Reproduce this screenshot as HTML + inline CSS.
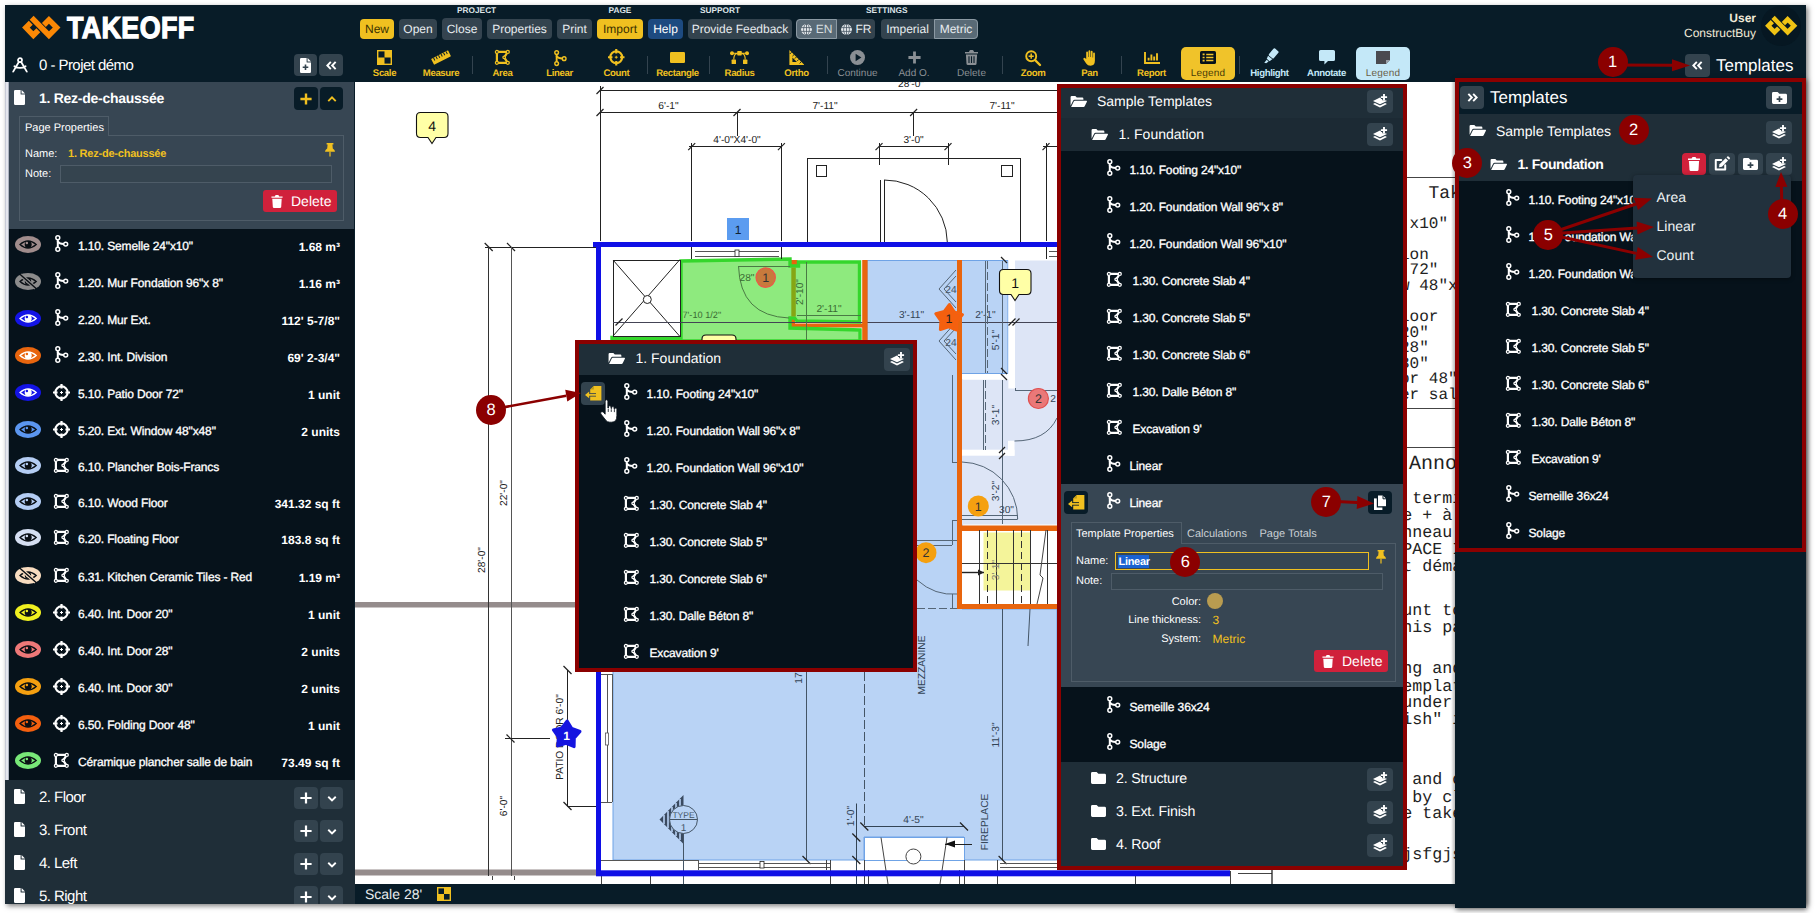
<!DOCTYPE html><html><head><meta charset="utf-8"><title>Takeoff</title><style>
html,body{margin:0;padding:0;background:#fff}
body{text-rendering:geometricPrecision;width:1815px;height:913px;overflow:hidden;position:relative;font-family:"Liberation Sans",sans-serif;color:#fff}
div{position:absolute;box-sizing:border-box}
svg{display:block}
.t{position:absolute;white-space:nowrap;line-height:1;}
.b12{font-size:12px;-webkit-text-stroke:.33px currentColor;letter-spacing:-.14px}
.v12{font-size:12px;font-weight:bold}
.p15{font-size:15px;letter-spacing:-.55px}
.f14{font-size:14px}
.s11{font-size:11px;margin-top:.8px}
.mb{font-size:12px;line-height:20px;text-align:center;border-radius:4px;background:#33434e;color:#e8ecef}
.lab{font-size:8.3px;font-weight:bold;letter-spacing:0;color:#dfe6ea}
.tl{font-size:9.6px;font-weight:bold;text-align:center;transform:translateX(-50%);letter-spacing:-.35px}
.btn{border-radius:4px;background:#33434e}
.mono{font-family:"Liberation Mono",monospace;color:#222;font-size:15px}
.circ{border-radius:50%;background:#8b0000;color:#fff;font-size:16.5px;text-align:center}
.cv{font-size:9px;fill:#222;font-family:"Liberation Sans",sans-serif}
</style></head><body>
<div style="left:5px;top:5px;width:1801px;height:899px;background:#081c28;box-shadow:2px 2px 5px rgba(0,0,0,.5)"></div>
<div style="left:1455px;top:78px;width:351px;height:829.5px;background:#081c28;box-shadow:1px 2px 5px rgba(0,0,0,.5)"></div>
<div style="left:0;top:0;width:1806px;height:904px;overflow:hidden">
<svg style="position:absolute;left:21.8px;top:15.9px;overflow:visible" width="38.5" height="23.2" viewBox="0 0 38.5 23.2" ><g fill="none" stroke="#fb8805" stroke-width="5.50" stroke-linejoin="miter"><path d="M8.75 6.77 L3.93 11.59 L11.38 19.26 L16.33 14.31"/><path d="M9.63 1.74 L26.93 19.26 L34.59 11.59 L26.93 3.93 L21.89 8.96"/></g></svg>
<span class="t" style="left:66.6px;top:12.5px;font-size:30.5px;font-weight:bold;transform-origin:0 50%;transform:scaleX(.882);-webkit-text-stroke:1.25px #fff;letter-spacing:.4px">TAKEOFF</span>
<span class="t lab" style="left:457px;top:6px;">PROJECT</span>
<span class="t lab" style="left:608.5px;top:6px;">PAGE</span>
<span class="t lab" style="left:700px;top:6px;">SUPPORT</span>
<span class="t lab" style="left:866px;top:6px;">SETTINGS</span>
<div class="mb" style="left:360px;top:19px;width:34px;height:20px;line-height:20px;background:#f0c020;color:#3a3000">New</div>
<div class="mb" style="left:399px;top:19px;width:38px;height:20px;line-height:20px;">Open</div>
<div class="mb" style="left:442px;top:18px;width:40px;height:22px;line-height:22px;background:#34434f">Close</div>
<div class="mb" style="left:487px;top:19px;width:65px;height:20px;line-height:20px;">Properties</div>
<div class="mb" style="left:557px;top:19px;width:35px;height:20px;line-height:20px;">Print</div>
<div class="mb" style="left:597px;top:19px;width:46px;height:20px;line-height:20px;background:#f0c020;color:#3a3000">Import</div>
<div class="mb" style="left:648px;top:19px;width:35px;height:20px;line-height:20px;background:#1d4a80;color:#fff">Help</div>
<div class="mb" style="left:688px;top:19px;width:104px;height:20px;line-height:20px;">Provide Feedback</div>
<div class="mb" style="left:796px;top:19px;width:79px;height:20px;line-height:20px;"></div>
<div class="mb" style="left:796px;top:19px;width:41px;height:20px;line-height:20px;background:#596a76;border:1px solid #8b99a3;line-height:18px;border-radius:4px 0 0 4px;color:#d6dcdf"><svg style="display:inline-block;vertical-align:-2px;margin-right:4px" width="11" height="11" viewBox="0 0 11 11"><circle cx="5.5" cy="5.5" r="5.4" fill="#e4e8eb"/><path d="M5.5 0V11M0 3.6H11M0 7.4H11" stroke="#4a5966" stroke-width=".8" fill="none"/><ellipse cx="5.5" cy="5.5" rx="2.9" ry="5.4" fill="none" stroke="#4a5966" stroke-width=".8"/></svg>EN</div>
<div class="mb" style="left:837px;top:19px;width:38px;height:20px;background:none"><svg style="display:inline-block;vertical-align:-2px;margin-right:4px" width="11" height="11" viewBox="0 0 11 11"><circle cx="5.5" cy="5.5" r="5.4" fill="#e4e8eb"/><path d="M5.5 0V11M0 3.6H11M0 7.4H11" stroke="#4a5966" stroke-width=".8" fill="none"/><ellipse cx="5.5" cy="5.5" rx="2.9" ry="5.4" fill="none" stroke="#4a5966" stroke-width=".8"/></svg>FR</div>
<div class="mb" style="left:881px;top:19px;width:97px;height:20px;line-height:20px;"></div>
<div class="mb" style="left:881px;top:19px;width:53px;height:20px;background:none">Imperial</div>
<div class="mb" style="left:934px;top:19px;width:44px;height:20px;line-height:20px;background:#596a76;border:1px solid #8b99a3;line-height:18px;border-radius:0 4px 4px 0">Metric</div>
<span class="t" style="right:50px;top:12px;font-size:12px;font-weight:bold;color:#f1ead8">User</span>
<span class="t" style="right:50px;top:27px;font-size:12px;color:#f1ead8">ConstructBuy</span>
<div style="left:1761px;top:6px;width:40px;height:40px;border-radius:50%;background:#061722"></div>
<svg style="position:absolute;left:1764.7px;top:16px;overflow:visible" width="32.3" height="19.5" viewBox="0 0 32.3 19.5" ><g fill="none" stroke="#f0c314" stroke-width="4.62" stroke-linejoin="miter"><path d="M7.35 5.69 L3.30 9.74 L9.56 16.18 L13.72 12.02"/><path d="M8.09 1.46 L22.62 16.18 L29.06 9.74 L22.62 3.30 L18.39 7.53"/></g></svg>
<svg style="position:absolute;left:377px;top:50px;overflow:visible" width="15" height="15" viewBox="0 0 15 15" ><rect x=".7" y=".7" width="13.6" height="13.6" fill="none" stroke="#f0c020" stroke-width="1.4"/><rect x="7.5" y="0" width="7.5" height="7.5" fill="#f0c020"/><rect x="0" y="7.5" width="7.5" height="7.5" fill="#f0c020"/></svg>
<span class="t tl" style="left:384.5px;top:68.6px;color:#f0c020">Scale</span>
<svg style="position:absolute;left:431px;top:49px;overflow:visible" width="20" height="17" viewBox="0 0 20 17" ><g transform="rotate(-27 10 8.5)"><rect x="0.5" y="5.3" width="19" height="6.6" rx=".6" fill="#f0c020"/><path d="M3.2 5.3V8.3M6 5.3V8.3M8.8 5.3V8.3M11.6 5.3V8.3M14.4 5.3V8.3M17.2 5.3V8.3" stroke="#081c28" stroke-width="1"/></g></svg>
<span class="t tl" style="left:441px;top:68.6px;color:#f0c020">Measure</span>
<div style="left:472px;top:56px;width:1px;height:18px;background:#33434f"></div>
<svg style="position:absolute;left:495.2px;top:50.2px;overflow:visible" width="14.7" height="14.7" viewBox="0 0 14.7 14.7" ><g fill="none" stroke="#f0c020" stroke-width="2.2" stroke-linejoin="round"><path d="M1.9 1.9 L12.8 1.9 L9.2 7.35 L12.8 12.8 L1.9 12.8 Z"/><g fill="#081c28" stroke-width="1.3"><circle cx="1.9" cy="1.9" r="1.5"/><circle cx="12.8" cy="1.9" r="1.5"/><circle cx="12.8" cy="12.8" r="1.5"/><circle cx="1.9" cy="12.8" r="1.5"/><circle cx="9.2" cy="7.35" r="1.3"/></g></g></svg>
<span class="t tl" style="left:502.5px;top:68.6px;color:#f0c020">Area</span>
<svg style="position:absolute;left:553.8px;top:49.5px;overflow:visible" width="12.73" height="16.15" viewBox="0 0 13.4 17" ><g fill="none" stroke="#f0c020" stroke-width="2" stroke-linecap="round"><path d="M2.8 3 V14"/><path d="M2.8 6.6 Q4.4 8.8 8.6 9.0"/><g fill="#081c28" stroke-width="1.5"><circle cx="2.8" cy="2.7" r="1.95"/><circle cx="2.8" cy="14.3" r="1.95"/><circle cx="10.7" cy="9.1" r="1.95"/></g></g></svg>
<span class="t tl" style="left:559.5px;top:68.6px;color:#f0c020">Linear</span>
<svg style="position:absolute;left:608.2px;top:49.2px;overflow:visible" width="16.49" height="16.49" viewBox="0 0 17 17" ><g fill="none" stroke="#f0c020" stroke-width="2.2" stroke-linecap="butt"><circle cx="8.5" cy="8.5" r="6.1"/><path d="M8.5 0V4.6 M8.5 12.4V17 M0 8.5H4.6 M12.4 8.5H17"/></g><path d="M8.5 7V10M7 8.5H10" stroke="#f0c020" stroke-width="1"/></svg>
<span class="t tl" style="left:616.5px;top:68.6px;color:#f0c020">Count</span>
<div style="left:647px;top:56px;width:1px;height:18px;background:#33434f"></div>
<svg style="position:absolute;left:670px;top:52px;overflow:visible" width="15" height="11" viewBox="0 0 15 11" ><rect width="15" height="11" rx="1.2" fill="#f0c020"/></svg>
<span class="t tl" style="left:677.5px;top:68.6px;color:#f0c020">Rectangle</span>
<div style="left:709px;top:56px;width:1px;height:18px;background:#33434f"></div>
<svg style="position:absolute;left:730px;top:51px;overflow:visible" width="19" height="13" viewBox="0 0 19 13" ><g fill="#f0c020"><rect x="7.2" y="0" width="4.6" height="4.6" rx=".8"/><rect x="1.6" y="8.6" width="4.4" height="4.4" rx=".6"/><rect x="13" y="8.6" width="4.4" height="4.4" rx=".6"/><circle cx="2" cy="2.3" r="2"/><circle cx="17" cy="2.3" r="2"/></g><path d="M2 2.3H17 M3.8 8.6 Q3.8 2.8 7.2 2.4 M15.2 8.6 Q15.2 2.8 11.8 2.4" stroke="#f0c020" stroke-width="1.1" fill="none"/></svg>
<span class="t tl" style="left:739.5px;top:68.6px;color:#f0c020">Radius</span>
<svg style="position:absolute;left:789px;top:50px;overflow:visible" width="15" height="15" viewBox="0 0 15 15" ><path d="M0.4 0 L15 14.6 V15 H0.4 Z M3.4 7.6 L8 12 H3.4 Z" fill="#f0c020" fill-rule="evenodd"/><path d="M2.6 2.2 L0.8 4 M5 4.6 L3.4 6.2 M7.4 7 L5.8 8.6 M9.8 9.4 L8.2 11 M12.2 11.8 L10.6 13.4" stroke="#081c28" stroke-width=".9"/></svg>
<span class="t tl" style="left:796.5px;top:68.6px;color:#f0c020">Ortho</span>
<div style="left:827px;top:56px;width:1px;height:18px;background:#33434f"></div>
<svg style="position:absolute;left:850px;top:50px;overflow:visible" width="15" height="15" viewBox="0 0 15 15" ><circle cx="7.5" cy="7.5" r="7.5" fill="#8a8f94"/><path d="M5.6 3.8 L11.4 7.5 L5.6 11.2 Z" fill="#081c28"/></svg>
<span class="t tl" style="left:857.5px;top:68.6px;color:#8a8f94;font-weight:normal;font-size:10px;letter-spacing:0">Continue</span>
<svg style="position:absolute;left:907.5px;top:51px;overflow:visible" width="13" height="13" viewBox="0 0 12 12" ><path d="M6 0.4 V11.6 M0.4 6 H11.6" fill="none" stroke="#8a8f94" stroke-width="2.6"/></svg>
<span class="t tl" style="left:914px;top:68.6px;color:#8a8f94;font-weight:normal;font-size:10px;letter-spacing:0">Add O.</span>
<svg style="position:absolute;left:965px;top:50px;overflow:visible" width="13" height="15" viewBox="0 0 14 16" ><path d="M0 2 H4.2 L5 0.4 Q5.2 0 5.7 0 H8.3 Q8.8 0 9 0.4 L9.8 2 H14 V3.7 H0 Z" fill="#8a8f94"/><path d="M1 4.8 H13 L12.4 14.6 Q12.3 16 10.9 16 H3.1 Q1.7 16 1.6 14.6 Z" fill="#8a8f94"/><path d="M4.3 6.6 V13.8 M7 6.6 V13.8 M9.7 6.6 V13.8" stroke="#081c28" stroke-width="1.2"/></svg>
<span class="t tl" style="left:971.5px;top:68.6px;color:#8a8f94;font-weight:normal;font-size:10px;letter-spacing:0">Delete</span>
<div style="left:1002px;top:56px;width:1px;height:18px;background:#33434f"></div>
<svg style="position:absolute;left:1025px;top:50px;overflow:visible" width="16" height="16" viewBox="0 0 16 16" ><circle cx="6.2" cy="6.2" r="5" fill="none" stroke="#f0c020" stroke-width="1.9"/><path d="M10 10 L15 15" stroke="#f0c020" stroke-width="2.4" stroke-linecap="round"/><path d="M6.2 3.6V8.8M3.6 6.2H8.8" stroke="#f0c020" stroke-width="1.5"/></svg>
<span class="t tl" style="left:1033px;top:68.6px;color:#f0c020">Zoom</span>
<svg style="position:absolute;left:1083px;top:49.5px;overflow:visible" width="14" height="16" viewBox="0 0 14 16" ><path d="M3.2 9 V2.6 Q3.2 1.6 4.1 1.6 Q5 1.6 5 2.6 V7 H5.5 V1.2 Q5.5 .2 6.4 .2 Q7.3 .2 7.3 1.2 V7 H7.8 V1.8 Q7.8 .8 8.7 .8 Q9.6 .8 9.6 1.8 V7.4 H10.1 V3.6 Q10.1 2.6 11 2.6 Q11.9 2.6 11.9 3.6 V10.6 Q11.9 15.8 7.6 15.8 Q4.6 15.8 3.2 13.4 L.5 9.4 Q.0 8.4 .8 7.9 Q1.6 7.5 2.3 8.3 Z" fill="#f0c020"/></svg>
<span class="t tl" style="left:1089.5px;top:68.6px;color:#f0c020">Pan</span>
<div style="left:1121px;top:56px;width:1px;height:18px;background:#33434f"></div>
<svg style="position:absolute;left:1143.5px;top:52px;overflow:visible" width="16" height="12" viewBox="0 0 16 12" ><path d="M1 0V11H16" stroke="#f0c020" stroke-width="1.9" fill="none"/><path d="M4.6 8.6V5.8M7.4 8.6V2.4M10.2 8.6V4.4M13 8.6V1.2" stroke="#f0c020" stroke-width="1.9"/></svg>
<span class="t tl" style="left:1151.5px;top:68.6px;color:#f0c020">Report</span>
<div style="left:1181px;top:47px;width:54px;height:33px;background:#f0c32a;border-radius:5px"></div>
<svg style="position:absolute;left:1200px;top:51px;overflow:visible" width="16" height="13" viewBox="0 0 16 13" ><rect width="16" height="13" rx="1.6" fill="#06121b"/><path d="M2.6 3.4H4.6M2.6 6.5H4.6M2.6 9.6H4.6" stroke="#f0c32a" stroke-width="1.7"/><path d="M6.2 3.4H13.4M6.2 6.5H13.4M6.2 9.6H13.4" stroke="#f0c32a" stroke-width="1.5"/></svg>
<span class="t tl" style="font-weight:normal;font-size:10px;letter-spacing:.2px;left:1208px;top:68.6px;color:#4a3c08">Legend</span>
<div style="left:1239px;top:56px;width:1px;height:18px;background:#33434f"></div>
<svg style="position:absolute;left:1262px;top:50px;overflow:visible" width="16" height="15" viewBox="0 0 16 15" ><g transform="rotate(40 8 7.5)" fill="#c4e8f8"><rect x="5" y="-2.6" width="6.4" height="9.2" rx="1.2"/><path d="M5.4 7.4 H11 L10 10.6 H6.4 Z"/><path d="M7 11.4 H9.4 L8.8 14.4 L7 15.2 Z"/></g></svg>
<span class="t tl" style="left:1269.5px;top:68.6px;color:#c4e8f8">Highlight</span>
<svg style="position:absolute;left:1319px;top:50px;overflow:visible" width="16" height="15" viewBox="0 0 16 15" ><path d="M1.6 0 H14.4 Q16 0 16 1.6 V9.4 Q16 11 14.4 11 H9 L5.4 14.6 V11 H1.6 Q0 11 0 9.4 V1.6 Q0 0 1.6 0Z" fill="#c4e8f8"/></svg>
<span class="t tl" style="left:1326.5px;top:68.6px;color:#c4e8f8">Annotate</span>
<div style="left:1356px;top:47px;width:54px;height:33px;background:#c4e8f8;border-radius:5px"></div>
<svg style="position:absolute;left:1376px;top:51px;overflow:visible" width="14" height="13" viewBox="0 0 14 13" ><path d="M0 0H14V9L10 13H0Z" fill="#4a4a50"/><path d="M10 13V9H14Z" fill="#9aa0a8"/></svg>
<span class="t tl" style="font-weight:normal;font-size:10px;letter-spacing:.2px;left:1383px;top:68.6px;color:#6a6048">Legend</span>
<svg style="position:absolute;left:12px;top:57px;overflow:visible" width="16" height="16" viewBox="0 0 16 16" ><g fill="none" stroke="#fff" stroke-width="1.8" stroke-linecap="round"><circle cx="8" cy="3.2" r="2"/><path d="M6.8 5 L1.2 14.6 M9.2 5 L14.8 14.6 M2.4 9.2 Q8 12.6 13.6 9.2"/></g></svg>
<span class="t p15" style="left:39px;top:57.5px;letter-spacing:-.55px">0 - Projet démo</span>
<div class="btn" style="left:294px;top:54px;width:23px;height:22px;"><svg style="position:absolute;left:6px;top:3.5px;overflow:visible" width="11" height="15" viewBox="0 0 11 15" ><path d="M0 1.2 Q0 0 1.2 0 H6.6 V4 Q6.6 4.6 7.2 4.6 H11 V13.8 Q11 15 9.8 15 H1.2 Q0 15 0 13.8 Z M7.6 0 L11 3.6 H7.6 Z" fill="#fff"/><path d="M5.5 6.4 V12 M2.7 9.2 H8.3" stroke="#33434e" stroke-width="1.6"/></svg></div>
<div class="btn" style="left:319px;top:54px;width:24px;height:22px;"><svg style="position:absolute;left:6.5px;top:6.5px;overflow:visible" width="11" height="9" viewBox="0 0 11.4 9" ><path d="M5 0.8 L1.4 4.5 L5 8.2 M10 0.8 L6.4 4.5 L10 8.2" fill="none" stroke="#fff" stroke-width="2" /></svg></div>
<div style="left:5px;top:82px;width:349.3px;height:698px;background:linear-gradient(90deg,#b9bdcc 0,#e4e6ee 1.5px,#e4e6ee 2.6px,#8f97a8 4px)"></div>
<div style="left:9px;top:82px;width:345.3px;height:147px;background:#374653"></div>
<svg style="position:absolute;left:14px;top:90px;overflow:visible" width="11" height="15" viewBox="0 0 11 15" ><path d="M0 1.2 Q0 0 1.2 0 H6.6 V4 Q6.6 4.6 7.2 4.6 H11 V13.8 Q11 15 9.8 15 H1.2 Q0 15 0 13.8 Z M7.6 0 L11 3.6 H7.6 Z" fill="#fff"/></svg>
<span class="t f14" style="left:39px;top:91px;font-weight:bold;letter-spacing:-.27px">1. Rez-de-chaussée</span>
<div class="btn" style="left:294px;top:87px;width:24px;height:23px;background:#081c28"><svg style="position:absolute;left:6px;top:5.5px;overflow:visible" width="12" height="12" viewBox="0 0 12 12" ><path d="M6 0.4 V11.6 M0.4 6 H11.6" fill="none" stroke="#f0c020" stroke-width="2.4"/></svg></div>
<div class="btn" style="left:320px;top:87px;width:23px;height:23px;background:#081c28"><svg style="position:absolute;left:6.5px;top:8.5px;overflow:visible" width="10" height="6" viewBox="0 0 10 6.4" ><path d="M1 5.4 L5 1.4 L9 5.4" fill="none" stroke="#f0c020" stroke-width="2"/></svg></div>
<div style="left:19px;top:135px;width:325px;height:86px;border:1px solid #4e5c68"></div>
<div style="left:19px;top:116px;width:90px;height:20px;border:1px solid #4e5c68;border-bottom:none;background:#374653"></div>
<span class="t s11" style="left:25px;top:122px;">Page Properties</span>
<span class="t s11" style="left:25px;top:148px;">Name:</span>
<span class="t s11" style="left:68px;top:148px;font-weight:bold;color:#f0c020;letter-spacing:-.22px">1. Rez-de-chaussée</span>
<svg style="position:absolute;left:325px;top:143px;overflow:visible" width="10" height="14" viewBox="0 0 10 14" ><path d="M1.6 0 H8.4 V1.6 H7.4 L7.8 5.4 Q10 6.6 10 8.8 H0 Q0 6.6 2.2 5.4 L2.6 1.6 H1.6 Z" fill="#f0c020"/><path d="M4.4 8.8 H5.6 V13 L5 14 L4.4 13 Z" fill="#f0c020"/></svg>
<span class="t s11" style="left:25px;top:168px;">Note:</span>
<div style="left:60px;top:165px;width:272px;height:18px;border:1px solid #4e5c68;background:#35444f"></div>
<div style="left:263px;top:190px;width:74px;height:22px;background:#d0213b;border-radius:3px"><svg style="position:absolute;left:8px;top:4.5px;overflow:visible" width="12" height="13" viewBox="0 0 12 14" ><path d="M0 1.6 H3.6 L4.3 0.3 Q4.5 0 4.9 0 H7.1 Q7.5 0 7.7 0.3 L8.4 1.6 H12 V3 H0 Z" fill="#fff"/><path d="M0.9 4 H11.1 L10.5 12.8 Q10.4 14 9.2 14 H2.8 Q1.6 14 1.5 12.8 Z" fill="#fff"/></svg><span class="t" style="left:28px;top:4px;font-size:14px">Delete</span></div>
<div style="left:9px;top:229px;width:345.3px;height:551px;background:#06121b"></div>
<svg style="position:absolute;left:15px;top:235.7px;overflow:visible" width="26" height="17" viewBox="0 0 26 17" ><ellipse cx="13" cy="8.5" rx="13" ry="8.5" fill="#a08c8c"/><path d="M5 8.5 Q13 1.4 21.2 8.5 Q13 15.6 5 8.5 Z" fill="none" stroke="#0a0f14" stroke-width="1.3"/><circle cx="13.2" cy="8.5" r="3.5" fill="#0a0f14"/><circle cx="11.9" cy="7.1" r="1.25" fill="#a08c8c"/></svg>
<svg style="position:absolute;left:55px;top:235.2px;overflow:visible" width="13.4" height="17.0" viewBox="0 0 13.4 17" ><g fill="none" stroke="#fff" stroke-width="2" stroke-linecap="round"><path d="M2.8 3 V14"/><path d="M2.8 6.6 Q4.4 8.8 8.6 9.0"/><g fill="#06121b" stroke-width="1.5"><circle cx="2.8" cy="2.7" r="1.95"/><circle cx="2.8" cy="14.3" r="1.95"/><circle cx="10.7" cy="9.1" r="1.95"/></g></g></svg>
<span class="t b12" style="left:78px;top:240px;">1.10. Semelle 24"x10"</span>
<span class="t v12" style="right:1466px;top:240.5px;">1.68 m³</span>
<svg style="position:absolute;left:15px;top:272.7px;overflow:visible" width="26" height="17" viewBox="0 0 26 17" ><ellipse cx="13" cy="8.5" rx="13" ry="8.5" fill="#8c8c8c"/><path d="M5 8.5 Q13 1.4 21.2 8.5 Q13 15.6 5 8.5 Z" fill="none" stroke="#0a0f14" stroke-width="1.3"/><circle cx="13" cy="8.5" r="2.6" fill="none" stroke="#0a0f14" stroke-width="1.2"/><path d="M5.5 1.8 L20.8 15.2" stroke="#8c8c8c" stroke-width="3.6"/><path d="M5.5 1.8 L20.8 15.2" stroke="#0a0f14" stroke-width="1.4" stroke-linecap="round"/></svg>
<svg style="position:absolute;left:55px;top:272.2px;overflow:visible" width="13.4" height="17.0" viewBox="0 0 13.4 17" ><g fill="none" stroke="#fff" stroke-width="2" stroke-linecap="round"><path d="M2.8 3 V14"/><path d="M2.8 6.6 Q4.4 8.8 8.6 9.0"/><g fill="#06121b" stroke-width="1.5"><circle cx="2.8" cy="2.7" r="1.95"/><circle cx="2.8" cy="14.3" r="1.95"/><circle cx="10.7" cy="9.1" r="1.95"/></g></g></svg>
<span class="t b12" style="left:78px;top:277px;">1.20. Mur Fondation 96"x 8"</span>
<span class="t v12" style="right:1466px;top:277.5px;">1.16 m³</span>
<svg style="position:absolute;left:15px;top:309.7px;overflow:visible" width="26" height="17" viewBox="0 0 26 17" ><ellipse cx="13" cy="8.5" rx="13" ry="8.5" fill="#1414e6"/><path d="M5 8.5 Q13 1.4 21.2 8.5 Q13 15.6 5 8.5 Z" fill="none" stroke="#fff" stroke-width="1.3"/><circle cx="13.2" cy="8.5" r="3.5" fill="#fff"/><circle cx="11.9" cy="7.1" r="1.25" fill="#1414e6"/></svg>
<svg style="position:absolute;left:55px;top:309.2px;overflow:visible" width="13.4" height="17.0" viewBox="0 0 13.4 17" ><g fill="none" stroke="#fff" stroke-width="2" stroke-linecap="round"><path d="M2.8 3 V14"/><path d="M2.8 6.6 Q4.4 8.8 8.6 9.0"/><g fill="#06121b" stroke-width="1.5"><circle cx="2.8" cy="2.7" r="1.95"/><circle cx="2.8" cy="14.3" r="1.95"/><circle cx="10.7" cy="9.1" r="1.95"/></g></g></svg>
<span class="t b12" style="left:78px;top:314px;">2.20. Mur Ext.</span>
<span class="t v12" style="right:1466px;top:314.5px;">112' 5-7/8"</span>
<svg style="position:absolute;left:15px;top:346.7px;overflow:visible" width="26" height="17" viewBox="0 0 26 17" ><ellipse cx="13" cy="8.5" rx="13" ry="8.5" fill="#e8650e"/><path d="M5 8.5 Q13 1.4 21.2 8.5 Q13 15.6 5 8.5 Z" fill="none" stroke="#fff" stroke-width="1.3"/><circle cx="13.2" cy="8.5" r="3.5" fill="#fff"/><circle cx="11.9" cy="7.1" r="1.25" fill="#e8650e"/></svg>
<svg style="position:absolute;left:55px;top:346.2px;overflow:visible" width="13.4" height="17.0" viewBox="0 0 13.4 17" ><g fill="none" stroke="#fff" stroke-width="2" stroke-linecap="round"><path d="M2.8 3 V14"/><path d="M2.8 6.6 Q4.4 8.8 8.6 9.0"/><g fill="#06121b" stroke-width="1.5"><circle cx="2.8" cy="2.7" r="1.95"/><circle cx="2.8" cy="14.3" r="1.95"/><circle cx="10.7" cy="9.1" r="1.95"/></g></g></svg>
<span class="t b12" style="left:78px;top:351px;">2.30. Int. Division</span>
<span class="t v12" style="right:1466px;top:351.5px;">69' 2-3/4"</span>
<svg style="position:absolute;left:15px;top:383.7px;overflow:visible" width="26" height="17" viewBox="0 0 26 17" ><ellipse cx="13" cy="8.5" rx="13" ry="8.5" fill="#1414e6"/><path d="M5 8.5 Q13 1.4 21.2 8.5 Q13 15.6 5 8.5 Z" fill="none" stroke="#fff" stroke-width="1.3"/><circle cx="13.2" cy="8.5" r="3.5" fill="#fff"/><circle cx="11.9" cy="7.1" r="1.25" fill="#1414e6"/></svg>
<svg style="position:absolute;left:53px;top:383.7px;overflow:visible" width="17.0" height="17.0" viewBox="0 0 17 17" ><g fill="none" stroke="#fff" stroke-width="2.2" stroke-linecap="butt"><circle cx="8.5" cy="8.5" r="6.1"/><path d="M8.5 0V4.6 M8.5 12.4V17 M0 8.5H4.6 M12.4 8.5H17"/></g><path d="M8.5 7V10M7 8.5H10" stroke="#fff" stroke-width="1"/></svg>
<span class="t b12" style="left:78px;top:388px;">5.10. Patio Door 72"</span>
<span class="t v12" style="right:1466px;top:388.5px;">1 unit</span>
<svg style="position:absolute;left:15px;top:420.7px;overflow:visible" width="26" height="17" viewBox="0 0 26 17" ><ellipse cx="13" cy="8.5" rx="13" ry="8.5" fill="#5b96f0"/><path d="M5 8.5 Q13 1.4 21.2 8.5 Q13 15.6 5 8.5 Z" fill="none" stroke="#0a0f14" stroke-width="1.3"/><circle cx="13.2" cy="8.5" r="3.5" fill="#0a0f14"/><circle cx="11.9" cy="7.1" r="1.25" fill="#5b96f0"/></svg>
<svg style="position:absolute;left:53px;top:420.7px;overflow:visible" width="17.0" height="17.0" viewBox="0 0 17 17" ><g fill="none" stroke="#fff" stroke-width="2.2" stroke-linecap="butt"><circle cx="8.5" cy="8.5" r="6.1"/><path d="M8.5 0V4.6 M8.5 12.4V17 M0 8.5H4.6 M12.4 8.5H17"/></g><path d="M8.5 7V10M7 8.5H10" stroke="#fff" stroke-width="1"/></svg>
<span class="t b12" style="left:78px;top:425px;">5.20. Ext. Window 48"x48"</span>
<span class="t v12" style="right:1466px;top:425.5px;">2 units</span>
<svg style="position:absolute;left:15px;top:456.7px;overflow:visible" width="26" height="17" viewBox="0 0 26 17" ><ellipse cx="13" cy="8.5" rx="13" ry="8.5" fill="#b4cdf4"/><path d="M5 8.5 Q13 1.4 21.2 8.5 Q13 15.6 5 8.5 Z" fill="none" stroke="#0a0f14" stroke-width="1.3"/><circle cx="13.2" cy="8.5" r="3.5" fill="#0a0f14"/><circle cx="11.9" cy="7.1" r="1.25" fill="#b4cdf4"/></svg>
<svg style="position:absolute;left:54px;top:457.8px;overflow:visible" width="14.7" height="14.7" viewBox="0 0 14.7 14.7" ><g fill="none" stroke="#fff" stroke-width="2.2" stroke-linejoin="round"><path d="M1.9 1.9 L12.8 1.9 L9.2 7.35 L12.8 12.8 L1.9 12.8 Z"/><g fill="#06121b" stroke-width="1.3"><circle cx="1.9" cy="1.9" r="1.5"/><circle cx="12.8" cy="1.9" r="1.5"/><circle cx="12.8" cy="12.8" r="1.5"/><circle cx="1.9" cy="12.8" r="1.5"/><circle cx="9.2" cy="7.35" r="1.3"/></g></g></svg>
<span class="t b12" style="left:78px;top:461px;">6.10. Plancher Bois-Francs</span>
<svg style="position:absolute;left:15px;top:492.7px;overflow:visible" width="26" height="17" viewBox="0 0 26 17" ><ellipse cx="13" cy="8.5" rx="13" ry="8.5" fill="#b4cdf4"/><path d="M5 8.5 Q13 1.4 21.2 8.5 Q13 15.6 5 8.5 Z" fill="none" stroke="#0a0f14" stroke-width="1.3"/><circle cx="13.2" cy="8.5" r="3.5" fill="#0a0f14"/><circle cx="11.9" cy="7.1" r="1.25" fill="#b4cdf4"/></svg>
<svg style="position:absolute;left:54px;top:493.8px;overflow:visible" width="14.7" height="14.7" viewBox="0 0 14.7 14.7" ><g fill="none" stroke="#fff" stroke-width="2.2" stroke-linejoin="round"><path d="M1.9 1.9 L12.8 1.9 L9.2 7.35 L12.8 12.8 L1.9 12.8 Z"/><g fill="#06121b" stroke-width="1.3"><circle cx="1.9" cy="1.9" r="1.5"/><circle cx="12.8" cy="1.9" r="1.5"/><circle cx="12.8" cy="12.8" r="1.5"/><circle cx="1.9" cy="12.8" r="1.5"/><circle cx="9.2" cy="7.35" r="1.3"/></g></g></svg>
<span class="t b12" style="left:78px;top:497px;">6.10. Wood Floor</span>
<span class="t v12" style="right:1466px;top:497.5px;">341.32 sq ft</span>
<svg style="position:absolute;left:15px;top:528.7px;overflow:visible" width="26" height="17" viewBox="0 0 26 17" ><ellipse cx="13" cy="8.5" rx="13" ry="8.5" fill="#d5dff2"/><path d="M5 8.5 Q13 1.4 21.2 8.5 Q13 15.6 5 8.5 Z" fill="none" stroke="#0a0f14" stroke-width="1.3"/><circle cx="13.2" cy="8.5" r="3.5" fill="#0a0f14"/><circle cx="11.9" cy="7.1" r="1.25" fill="#d5dff2"/></svg>
<svg style="position:absolute;left:54px;top:529.8px;overflow:visible" width="14.7" height="14.7" viewBox="0 0 14.7 14.7" ><g fill="none" stroke="#fff" stroke-width="2.2" stroke-linejoin="round"><path d="M1.9 1.9 L12.8 1.9 L9.2 7.35 L12.8 12.8 L1.9 12.8 Z"/><g fill="#06121b" stroke-width="1.3"><circle cx="1.9" cy="1.9" r="1.5"/><circle cx="12.8" cy="1.9" r="1.5"/><circle cx="12.8" cy="12.8" r="1.5"/><circle cx="1.9" cy="12.8" r="1.5"/><circle cx="9.2" cy="7.35" r="1.3"/></g></g></svg>
<span class="t b12" style="left:78px;top:533px;">6.20. Floating Floor</span>
<span class="t v12" style="right:1466px;top:533.5px;">183.8 sq ft</span>
<svg style="position:absolute;left:15px;top:566.7px;overflow:visible" width="26" height="17" viewBox="0 0 26 17" ><ellipse cx="13" cy="8.5" rx="13" ry="8.5" fill="#f8dcc0"/><path d="M5 8.5 Q13 1.4 21.2 8.5 Q13 15.6 5 8.5 Z" fill="none" stroke="#0a0f14" stroke-width="1.3"/><circle cx="13" cy="8.5" r="2.6" fill="none" stroke="#0a0f14" stroke-width="1.2"/><path d="M5.5 1.8 L20.8 15.2" stroke="#f8dcc0" stroke-width="3.6"/><path d="M5.5 1.8 L20.8 15.2" stroke="#0a0f14" stroke-width="1.4" stroke-linecap="round"/></svg>
<svg style="position:absolute;left:54px;top:567.8px;overflow:visible" width="14.7" height="14.7" viewBox="0 0 14.7 14.7" ><g fill="none" stroke="#fff" stroke-width="2.2" stroke-linejoin="round"><path d="M1.9 1.9 L12.8 1.9 L9.2 7.35 L12.8 12.8 L1.9 12.8 Z"/><g fill="#06121b" stroke-width="1.3"><circle cx="1.9" cy="1.9" r="1.5"/><circle cx="12.8" cy="1.9" r="1.5"/><circle cx="12.8" cy="12.8" r="1.5"/><circle cx="1.9" cy="12.8" r="1.5"/><circle cx="9.2" cy="7.35" r="1.3"/></g></g></svg>
<span class="t b12" style="left:78px;top:571px;">6.31. Kitchen Ceramic Tiles - Red</span>
<span class="t v12" style="right:1466px;top:571.5px;">1.19 m³</span>
<svg style="position:absolute;left:15px;top:603.7px;overflow:visible" width="26" height="17" viewBox="0 0 26 17" ><ellipse cx="13" cy="8.5" rx="13" ry="8.5" fill="#f0f020"/><path d="M5 8.5 Q13 1.4 21.2 8.5 Q13 15.6 5 8.5 Z" fill="none" stroke="#0a0f14" stroke-width="1.3"/><circle cx="13.2" cy="8.5" r="3.5" fill="#0a0f14"/><circle cx="11.9" cy="7.1" r="1.25" fill="#f0f020"/></svg>
<svg style="position:absolute;left:53px;top:603.7px;overflow:visible" width="17.0" height="17.0" viewBox="0 0 17 17" ><g fill="none" stroke="#fff" stroke-width="2.2" stroke-linecap="butt"><circle cx="8.5" cy="8.5" r="6.1"/><path d="M8.5 0V4.6 M8.5 12.4V17 M0 8.5H4.6 M12.4 8.5H17"/></g><path d="M8.5 7V10M7 8.5H10" stroke="#fff" stroke-width="1"/></svg>
<span class="t b12" style="left:78px;top:608px;">6.40. Int. Door 20"</span>
<span class="t v12" style="right:1466px;top:608.5px;">1 unit</span>
<svg style="position:absolute;left:15px;top:640.7px;overflow:visible" width="26" height="17" viewBox="0 0 26 17" ><ellipse cx="13" cy="8.5" rx="13" ry="8.5" fill="#ee7878"/><path d="M5 8.5 Q13 1.4 21.2 8.5 Q13 15.6 5 8.5 Z" fill="none" stroke="#0a0f14" stroke-width="1.3"/><circle cx="13.2" cy="8.5" r="3.5" fill="#0a0f14"/><circle cx="11.9" cy="7.1" r="1.25" fill="#ee7878"/></svg>
<svg style="position:absolute;left:53px;top:640.7px;overflow:visible" width="17.0" height="17.0" viewBox="0 0 17 17" ><g fill="none" stroke="#fff" stroke-width="2.2" stroke-linecap="butt"><circle cx="8.5" cy="8.5" r="6.1"/><path d="M8.5 0V4.6 M8.5 12.4V17 M0 8.5H4.6 M12.4 8.5H17"/></g><path d="M8.5 7V10M7 8.5H10" stroke="#fff" stroke-width="1"/></svg>
<span class="t b12" style="left:78px;top:645px;">6.40. Int. Door 28"</span>
<span class="t v12" style="right:1466px;top:645.5px;">2 units</span>
<svg style="position:absolute;left:15px;top:677.7px;overflow:visible" width="26" height="17" viewBox="0 0 26 17" ><ellipse cx="13" cy="8.5" rx="13" ry="8.5" fill="#f5a010"/><path d="M5 8.5 Q13 1.4 21.2 8.5 Q13 15.6 5 8.5 Z" fill="none" stroke="#0a0f14" stroke-width="1.3"/><circle cx="13.2" cy="8.5" r="3.5" fill="#0a0f14"/><circle cx="11.9" cy="7.1" r="1.25" fill="#f5a010"/></svg>
<svg style="position:absolute;left:53px;top:677.7px;overflow:visible" width="17.0" height="17.0" viewBox="0 0 17 17" ><g fill="none" stroke="#fff" stroke-width="2.2" stroke-linecap="butt"><circle cx="8.5" cy="8.5" r="6.1"/><path d="M8.5 0V4.6 M8.5 12.4V17 M0 8.5H4.6 M12.4 8.5H17"/></g><path d="M8.5 7V10M7 8.5H10" stroke="#fff" stroke-width="1"/></svg>
<span class="t b12" style="left:78px;top:682px;">6.40. Int. Door 30"</span>
<span class="t v12" style="right:1466px;top:682.5px;">2 units</span>
<svg style="position:absolute;left:15px;top:714.7px;overflow:visible" width="26" height="17" viewBox="0 0 26 17" ><ellipse cx="13" cy="8.5" rx="13" ry="8.5" fill="#f4600f"/><path d="M5 8.5 Q13 1.4 21.2 8.5 Q13 15.6 5 8.5 Z" fill="none" stroke="#0a0f14" stroke-width="1.3"/><circle cx="13.2" cy="8.5" r="3.5" fill="#0a0f14"/><circle cx="11.9" cy="7.1" r="1.25" fill="#f4600f"/></svg>
<svg style="position:absolute;left:53px;top:714.7px;overflow:visible" width="17.0" height="17.0" viewBox="0 0 17 17" ><g fill="none" stroke="#fff" stroke-width="2.2" stroke-linecap="butt"><circle cx="8.5" cy="8.5" r="6.1"/><path d="M8.5 0V4.6 M8.5 12.4V17 M0 8.5H4.6 M12.4 8.5H17"/></g><path d="M8.5 7V10M7 8.5H10" stroke="#fff" stroke-width="1"/></svg>
<span class="t b12" style="left:78px;top:719px;">6.50. Folding Door 48"</span>
<span class="t v12" style="right:1466px;top:719.5px;">1 unit</span>
<svg style="position:absolute;left:15px;top:751.7px;overflow:visible" width="26" height="17" viewBox="0 0 26 17" ><ellipse cx="13" cy="8.5" rx="13" ry="8.5" fill="#78e878"/><path d="M5 8.5 Q13 1.4 21.2 8.5 Q13 15.6 5 8.5 Z" fill="none" stroke="#0a0f14" stroke-width="1.3"/><circle cx="13.2" cy="8.5" r="3.5" fill="#0a0f14"/><circle cx="11.9" cy="7.1" r="1.25" fill="#78e878"/></svg>
<svg style="position:absolute;left:54px;top:752.8px;overflow:visible" width="14.7" height="14.7" viewBox="0 0 14.7 14.7" ><g fill="none" stroke="#fff" stroke-width="2.2" stroke-linejoin="round"><path d="M1.9 1.9 L12.8 1.9 L9.2 7.35 L12.8 12.8 L1.9 12.8 Z"/><g fill="#06121b" stroke-width="1.3"><circle cx="1.9" cy="1.9" r="1.5"/><circle cx="12.8" cy="1.9" r="1.5"/><circle cx="12.8" cy="12.8" r="1.5"/><circle cx="1.9" cy="12.8" r="1.5"/><circle cx="9.2" cy="7.35" r="1.3"/></g></g></svg>
<span class="t b12" style="left:78px;top:756px;">Céramique plancher salle de bain</span>
<span class="t v12" style="right:1466px;top:756.5px;">73.49 sq ft</span>
<div style="left:5px;top:780px;width:350px;height:124px;background:#1f2e38"></div>
<svg style="position:absolute;left:14px;top:789px;overflow:visible" width="11" height="15" viewBox="0 0 11 15" ><path d="M0 1.2 Q0 0 1.2 0 H6.6 V4 Q6.6 4.6 7.2 4.6 H11 V13.8 Q11 15 9.8 15 H1.2 Q0 15 0 13.8 Z M7.6 0 L11 3.6 H7.6 Z" fill="#fff"/></svg>
<span class="t p15" style="left:39px;top:790px;">2. Floor</span>
<div class="btn" style="left:294px;top:787px;width:24px;height:22px;"><svg style="position:absolute;left:6px;top:5px;overflow:visible" width="12" height="12" viewBox="0 0 12 12" ><path d="M6 0.4 V11.6 M0.4 6 H11.6" fill="none" stroke="#fff" stroke-width="2.2"/></svg></div>
<div class="btn" style="left:320px;top:787px;width:23px;height:22px;"><svg style="position:absolute;left:6.5px;top:8.5px;overflow:visible" width="10" height="6" viewBox="0 0 10 6.4" ><path d="M1 0.8 L5 4.8 L9 0.8" fill="none" stroke="#fff" stroke-width="2"/></svg></div>
<svg style="position:absolute;left:14px;top:822px;overflow:visible" width="11" height="15" viewBox="0 0 11 15" ><path d="M0 1.2 Q0 0 1.2 0 H6.6 V4 Q6.6 4.6 7.2 4.6 H11 V13.8 Q11 15 9.8 15 H1.2 Q0 15 0 13.8 Z M7.6 0 L11 3.6 H7.6 Z" fill="#fff"/></svg>
<span class="t p15" style="left:39px;top:823px;">3. Front</span>
<div class="btn" style="left:294px;top:820px;width:24px;height:22px;"><svg style="position:absolute;left:6px;top:5px;overflow:visible" width="12" height="12" viewBox="0 0 12 12" ><path d="M6 0.4 V11.6 M0.4 6 H11.6" fill="none" stroke="#fff" stroke-width="2.2"/></svg></div>
<div class="btn" style="left:320px;top:820px;width:23px;height:22px;"><svg style="position:absolute;left:6.5px;top:8.5px;overflow:visible" width="10" height="6" viewBox="0 0 10 6.4" ><path d="M1 0.8 L5 4.8 L9 0.8" fill="none" stroke="#fff" stroke-width="2"/></svg></div>
<svg style="position:absolute;left:14px;top:855px;overflow:visible" width="11" height="15" viewBox="0 0 11 15" ><path d="M0 1.2 Q0 0 1.2 0 H6.6 V4 Q6.6 4.6 7.2 4.6 H11 V13.8 Q11 15 9.8 15 H1.2 Q0 15 0 13.8 Z M7.6 0 L11 3.6 H7.6 Z" fill="#fff"/></svg>
<span class="t p15" style="left:39px;top:856px;">4. Left</span>
<div class="btn" style="left:294px;top:853px;width:24px;height:22px;"><svg style="position:absolute;left:6px;top:5px;overflow:visible" width="12" height="12" viewBox="0 0 12 12" ><path d="M6 0.4 V11.6 M0.4 6 H11.6" fill="none" stroke="#fff" stroke-width="2.2"/></svg></div>
<div class="btn" style="left:320px;top:853px;width:23px;height:22px;"><svg style="position:absolute;left:6.5px;top:8.5px;overflow:visible" width="10" height="6" viewBox="0 0 10 6.4" ><path d="M1 0.8 L5 4.8 L9 0.8" fill="none" stroke="#fff" stroke-width="2"/></svg></div>
<svg style="position:absolute;left:14px;top:888px;overflow:visible" width="11" height="15" viewBox="0 0 11 15" ><path d="M0 1.2 Q0 0 1.2 0 H6.6 V4 Q6.6 4.6 7.2 4.6 H11 V13.8 Q11 15 9.8 15 H1.2 Q0 15 0 13.8 Z M7.6 0 L11 3.6 H7.6 Z" fill="#fff"/></svg>
<span class="t p15" style="left:39px;top:889px;">5. Right</span>
<div class="btn" style="left:294px;top:886px;width:24px;height:22px;"><svg style="position:absolute;left:6px;top:5px;overflow:visible" width="12" height="12" viewBox="0 0 12 12" ><path d="M6 0.4 V11.6 M0.4 6 H11.6" fill="none" stroke="#fff" stroke-width="2.2"/></svg></div>
<div class="btn" style="left:320px;top:886px;width:23px;height:22px;"><svg style="position:absolute;left:6.5px;top:8.5px;overflow:visible" width="10" height="6" viewBox="0 0 10 6.4" ><path d="M1 0.8 L5 4.8 L9 0.8" fill="none" stroke="#fff" stroke-width="2"/></svg></div>
<div style="left:355px;top:82px;width:1100px;height:802px;background:#fff"></div>
<svg style="position:absolute;left:355px;top:82px" width="1100" height="802" viewBox="355 82 1100 802" font-family="Liberation Sans, sans-serif" fill="none"><path d="M613 345 H867 V260.5 H1008 V373.5 H962 V609 H1057 V860 H964 V837 H864 V860 H613 Z" fill="#b9d3f5" stroke="#6fa3e6" stroke-width="1"/><rect x="962" y="379.5" width="95" height="145" fill="#dde5f6" stroke="none" stroke-width="1" /><rect x="1015" y="260.5" width="42" height="120" fill="#dde5f6" stroke="none" stroke-width="1" /><rect x="1008.4" y="260.5" width="6.6" height="128" fill="#fff" stroke="none" stroke-width="1" /><rect x="962" y="374" width="47" height="5.5" fill="#fff" stroke="none" stroke-width="1" /><rect x="962" y="449.7" width="52.5" height="6" fill="#fff" stroke="none" stroke-width="1" /><rect x="1008" y="440.8" width="6.5" height="15" fill="#fff" stroke="none" stroke-width="1" /><rect x="791" y="260" width="6.5" height="7" fill="#e8650e" stroke="none" stroke-width="1" /><rect x="790" y="319" width="5" height="8.5" fill="#e8650e" stroke="none" stroke-width="1" /><rect x="790" y="323.5" width="73" height="4" fill="#e8650e" stroke="none" stroke-width="1" /><path d="M681 261 L790 259 V266 H798.5 V262 H859.5 V322 L797 321 L794.5 318 H790 V328 L860 330 V341 H612 V337.5 H681 Z" fill="#8eea7e" stroke="#35d62c" stroke-width="3.4" stroke-linejoin="miter"/><rect x="613" y="260" width="67" height="76.5" fill="#fff" stroke="none" stroke-width="1" /><rect x="791.3" y="267.5" width="4.5" height="49" fill="#86a614" stroke="none" stroke-width="1" /><rect x="962" y="530" width="95" height="74" fill="#fff" stroke="none" stroke-width="1" /><rect x="983.5" y="532.5" width="46.5" height="58" fill="#f4f49a" stroke="none" stroke-width="1" /><rect x="355" y="602" width="220" height="5.5" fill="#958c8c" stroke="none" stroke-width="1" /><rect x="355" y="869.5" width="242" height="6" fill="#958c8c" stroke="none" stroke-width="1" /><path d="M600.5 86L600.5 241" stroke="#222" stroke-width="1" /><path d="M600 90.5L1057 90.5" stroke="#222" stroke-width="1" /><path d="M600 112.5L1057 112.5" stroke="#222" stroke-width="1" /><path d="M596.5 94.0L603.5 87.0" stroke="#222" stroke-width="1.2" /><path d="M596.5 116.0L603.5 109.0" stroke="#222" stroke-width="1.2" /><path d="M733.5 116.0L740.5 109.0" stroke="#222" stroke-width="1.2" /><path d="M910.1 116.0L917.1 109.0" stroke="#222" stroke-width="1.2" /><path d="M737.5 112.5L737.5 136" stroke="#222" stroke-width="1" /><path d="M913.5 112.5L913.5 136" stroke="#222" stroke-width="1" /><text x="668.5" y="109" font-size="10.2" text-anchor="middle" fill="#222" >6'-1"</text><text x="825" y="109" font-size="10.2" text-anchor="middle" fill="#222" >7'-11"</text><text x="1002" y="109" font-size="10.2" text-anchor="middle" fill="#222" >7'-11"</text><text x="911" y="86.5" font-size="10.2" text-anchor="middle" fill="#222" >28'-0"</text><path d="M691.5 143L691.5 241" stroke="#222" stroke-width="1" /><path d="M689 146.5L781.4 146.5" stroke="#222" stroke-width="1" /><path d="M781.5 143L781.5 241" stroke="#222" stroke-width="1" /><path d="M688.2 150.1L695.2 143.1" stroke="#222" stroke-width="1.2" /><path d="M777.9 150.1L784.9 143.1" stroke="#222" stroke-width="1.2" /><text x="737" y="143" font-size="10.2" text-anchor="middle" fill="#222" >4'-0"X4'-0"</text><path d="M879 146.5L948 146.5" stroke="#222" stroke-width="1" /><path d="M879.5 143L879.5 165" stroke="#222" stroke-width="1" /><path d="M948.5 143L948.5 165" stroke="#222" stroke-width="1" /><path d="M875.5 150.1L882.5 143.1" stroke="#222" stroke-width="1.2" /><path d="M944.5 150.1L951.5 143.1" stroke="#222" stroke-width="1.2" /><text x="913.6" y="143" font-size="10.2" text-anchor="middle" fill="#222" >3'-0"</text><path d="M1046.5 143L1046.5 241" stroke="#222" stroke-width="1" /><path d="M1043 146.5L1057 146.5" stroke="#222" stroke-width="1" /><path d="M1042.5 150.1L1049.5 143.1" stroke="#222" stroke-width="1.2" /><rect x="807.5" y="158.5" width="213.0" height="84.0" fill="none" stroke="#222" stroke-width="1" /><rect x="816.5" y="165.5" width="10.0" height="11.0" fill="none" stroke="#222" stroke-width="1" /><rect x="1001.5" y="165.5" width="11.0" height="11.0" fill="none" stroke="#222" stroke-width="1" /><path d="M880.5 180L880.5 242" stroke="#222" stroke-width="1" /><path d="M884.5 180L884.5 242" stroke="#222" stroke-width="1" /><path d="M884 180 A63 63 0 0 1 947.3 242" fill="none" stroke="#222"/><path d="M485 247.5L596 247.5" stroke="#222" stroke-width="1" /><path d="M484.7 243L492.7 251" stroke="#222" stroke-width="1.2" /><path d="M507 243L515 251" stroke="#222" stroke-width="1.2" /><path d="M488.5 247L488.5 876" stroke="#333" stroke-width="1" /><path d="M511.5 247L511.5 876" stroke="#555" stroke-width="1" /><text x="507" y="493" font-size="10.2" text-anchor="middle" fill="#222" transform="rotate(-90 507 493)" >22'-0"</text><text x="485" y="560" font-size="10.2" text-anchor="middle" fill="#222" transform="rotate(-90 485 560)" >28'-0"</text><text x="506.5" y="806" font-size="10.2" text-anchor="middle" fill="#222" transform="rotate(-90 506.5 806)" >6'-0"</text><path d="M505 738.5L550 738.5" stroke="#222" stroke-width="1" /><path d="M506.5 734.5L514.5 742.5" stroke="#222" stroke-width="1.2" /><path d="M567.5 670L567.5 806" stroke="#222" stroke-width="1" /><path d="M563.5 666L571.5 674" stroke="#222" stroke-width="1.2" /><path d="M563.5 802L571.5 810" stroke="#222" stroke-width="1.2" /><path d="M567.5 806.5L596 806.5" stroke="#222" stroke-width="1" /><text x="563" y="737" font-size="10.2" text-anchor="middle" fill="#222" transform="rotate(-90 563 737)" >PATIO DOOR 6'-0"</text><rect x="613.5" y="260.5" width="67.0" height="76.0" fill="none" stroke="#222" stroke-width="1" /><path d="M613 260L679.5 336" stroke="#222" stroke-width="1" /><path d="M613 336L679.5 260" stroke="#222" stroke-width="1" /><circle cx="647.3" cy="299.5" r="4" fill="#fff" stroke="#222"/><path d="M613 322.5L1057 322.5" stroke="#445" stroke-width="1" /><path d="M615.5 325.5L622.5 318.5" stroke="#222" stroke-width="1.2" /><path d="M691.5 247L691.5 259" stroke="#222" stroke-width="1" /><path d="M695 251.5L779 251.5" stroke="#555" stroke-width="1" /><path d="M695 256.5L779 256.5" stroke="#555" stroke-width="1" /><rect x="735" y="250" width="4" height="6.5" fill="#fff" stroke="#222" stroke-width="0.8" /><path d="M781.5 247L781.5 259" stroke="#222" stroke-width="1" /><path d="M1046.5 247L1046.5 259" stroke="#222" stroke-width="1" /><path d="M1049 251.5L1057 251.5" stroke="#555" stroke-width="1" /><path d="M1049 256.5L1057 256.5" stroke="#555" stroke-width="1" /><path d="M738.5 266 Q740 316 789 318" fill="none" stroke="#4a7a44"/><path d="M738.5 266.5L790 266.5" stroke="#4a7a44" stroke-width="1" /><text x="747" y="281" font-size="10.2" text-anchor="middle" fill="#3a6a34" >28"</text><text x="803" y="292" font-size="10.2" text-anchor="middle" fill="#3a6a34" transform="rotate(-90 803 292)" >2'-10"</text><text x="829" y="312.3" font-size="10.2" text-anchor="middle" fill="#3a6a34" >2'-11"</text><text x="682.5" y="318" font-size="9.2" text-anchor="start" fill="#3a6a34" >7'-10 1/2"</text><path d="M797 315.5L861 315.5" stroke="#4a7a44" stroke-width="1" /><path d="M806.5 262L806.5 340" stroke="#4a7a44" stroke-width="1" /><rect x="862.2" y="260" width="5.4" height="80" fill="#e8650e" stroke="none" stroke-width="1" /><rect x="957" y="260" width="5" height="349" fill="#e8650e" stroke="none" stroke-width="1" /><rect x="957" y="525.5" width="100" height="5.5" fill="#e8650e" stroke="none" stroke-width="1" /><rect x="957" y="604" width="100" height="5" fill="#e8650e" stroke="none" stroke-width="1" /><path d="M956 270 L939 289 L956 308 M956 276 L944 289 L956 302" fill="none" stroke="#567" stroke-width="1"/><path d="M956 322 L939 341 L956 360 M956 328 L944 341 L956 354" fill="none" stroke="#567" stroke-width="1"/><text x="951" y="293" font-size="10.2" text-anchor="middle" fill="#456" >24</text><text x="951" y="346" font-size="10.2" text-anchor="middle" fill="#456" >24</text><text x="911.5" y="318" font-size="10.2" text-anchor="middle" fill="#345" >3'-11"</text><text x="985.5" y="318" font-size="10.2" text-anchor="middle" fill="#345" >2'-1"</text><text x="998.5" y="340" font-size="10.2" text-anchor="middle" fill="#345" transform="rotate(-90 998.5 340)" >5'-1"</text><path d="M985.5 261L985.5 373" stroke="#567" stroke-width="1" /><path d="M987.5 261L987.5 373" stroke="#567" stroke-width="1" stroke-dasharray="8 3"/><path d="M1002.5 261L1002.5 373" stroke="#567" stroke-width="1" /><path d="M1001 257L1007 263" stroke="#222" stroke-width="1.2" /><path d="M1001 368L1007 374" stroke="#222" stroke-width="1.2" /><path d="M1001 374L1007 380" stroke="#222" stroke-width="1.2" /><path d="M1008.5 325.5L1015.5 318.5" stroke="#222" stroke-width="1.2" /><path d="M1012.5 325.5L1019.5 318.5" stroke="#222" stroke-width="1.2" /><path d="M1015 390.5L1057 390.5" stroke="#567" stroke-width="1" /><path d="M1015.5 388L1015.5 390.4" stroke="#567" stroke-width="1" /><path d="M983.5 380L983.5 450" stroke="#567" stroke-width="1" /><path d="M985.5 380L985.5 450" stroke="#567" stroke-width="1" stroke-dasharray="8 3"/><path d="M1002.5 380L1002.5 524" stroke="#567" stroke-width="1" /><path d="M999 453L1005 447" stroke="#222" stroke-width="1.2" /><path d="M999 459L1005 453" stroke="#222" stroke-width="1.2" /><path d="M1014.5 441 Q1046 441 1057 418" fill="none" stroke="#567"/><path d="M962 462 A57 57 0 0 1 1017.7 519" fill="none" stroke="#567"/><path d="M962 515.5L1017.7 515.5" stroke="#567" stroke-width="1" /><path d="M962 519.5L1017.7 519.5" stroke="#567" stroke-width="1" /><path d="M1017.5 515.6L1017.5 519" stroke="#567" stroke-width="1" /><text x="999" y="415" font-size="10.2" text-anchor="middle" fill="#345" transform="rotate(-90 999 415)" >3'-1"</text><text x="999" y="491" font-size="10.2" text-anchor="middle" fill="#345" transform="rotate(-90 999 491)" >3'-2"</text><text x="1006.5" y="513" font-size="10.2" text-anchor="middle" fill="#345" >30"</text><text x="1053" y="402" font-size="10.2" text-anchor="middle" fill="#345" >2</text><path d="M979.5 530L979.5 604" stroke="#333" stroke-width="1" /><path d="M996.5 530L996.5 604" stroke="#333" stroke-width="1" /><path d="M1013.5 530L1013.5 604" stroke="#333" stroke-width="1" /><path d="M1030.5 530L1030.5 604" stroke="#333" stroke-width="1" /><path d="M1047.5 530L1047.5 604" stroke="#333" stroke-width="1" /><path d="M987.5 530L987.5 604" stroke="#333" stroke-width="1" stroke-dasharray="7 4"/><path d="M1021.5 530L1021.5 604" stroke="#333" stroke-width="1" stroke-dasharray="7 4"/><path d="M962 563.5L1057 563.5" stroke="#333" stroke-width="1" /><path d="M962 572.5L984 572.5" stroke="#222" stroke-width="1.4" /><path d="M984 572.5 L978 569.5 V575.5 Z" fill="#222"/><path d="M1046 530 L1040 575 L1043 578 L1037 604" fill="none" stroke="#444"/><text x="999" y="570" font-size="10.2" text-anchor="middle" fill="#887" transform="rotate(-90 999 570)" >3'-1"</text><path d="M914 540.5L957 540.5" stroke="#567" stroke-width="1" /><path d="M914 545.5L952 545.5" stroke="#567" stroke-width="1" /><path d="M952.5 520L952.5 545" stroke="#567" stroke-width="1" /><path d="M952 520.5L957 520.5" stroke="#567" stroke-width="1" /><path d="M952 462.5L957 462.5" stroke="#567" stroke-width="1" /><path d="M952.5 375L952.5 462" stroke="#567" stroke-width="1" /><path d="M917 580 Q935 596 957 594" fill="none" stroke="#567"/><path d="M917 608.5L957 608.5" stroke="#567" stroke-width="1" stroke-dasharray="8 3"/><path d="M952.5 594L952.5 608" stroke="#567" stroke-width="1" /><path d="M806.5 672L806.5 860" stroke="#456" stroke-width="1" /><path d="M864.5 672L864.5 826" stroke="#456" stroke-width="1" stroke-dasharray="9 3"/><path d="M1002.5 609L1002.5 860" stroke="#456" stroke-width="1" /><path d="M1030 609L1028 646" stroke="#456" stroke-width="1" /><text x="802" y="678" font-size="10.2" text-anchor="middle" fill="#345" transform="rotate(-90 802 678)" >17</text><text x="925" y="665" font-size="10.2" text-anchor="middle" fill="#345" transform="rotate(-90 925 665)" >MEZZANINE</text><text x="999" y="735" font-size="10.2" text-anchor="middle" fill="#345" transform="rotate(-90 999 735)" >11'-3"</text><text x="987.5" y="822" font-size="10.2" text-anchor="middle" fill="#345" transform="rotate(-90 987.5 822)" >FIREPLACE</text><text x="913.5" y="823" font-size="10.2" text-anchor="middle" fill="#345" >4'-5"</text><path d="M864.3 826.5L964 826.5" stroke="#345" stroke-width="1" /><path d="M860.3 822.5L868.3 830.5" stroke="#222" stroke-width="1.2" /><path d="M960 822.5L968 830.5" stroke="#222" stroke-width="1.2" /><text x="853.5" y="816" font-size="10.2" text-anchor="middle" fill="#345" transform="rotate(-90 853.5 816)" >1'-0"</text><path d="M856.5 803.5L856.5 884" stroke="#345" stroke-width="1" /><path d="M852.3 833.5L860.3 841.5" stroke="#222" stroke-width="1.2" /><path d="M852.3 856L860.3 864" stroke="#222" stroke-width="1.2" /><path d="M802.5 856L810.5 864" stroke="#222" stroke-width="1.2" /><path d="M998.6 856L1006.6 864" stroke="#222" stroke-width="1.2" /><rect x="864.5" y="837.5" width="100.0" height="23.0" fill="#fff" stroke="#6fa3e6" stroke-width="1" /><path d="M881 837.5 L888 884 M947 837.5 L940 884" fill="none" stroke="#444"/><circle cx="913.4" cy="856.5" r="7.5" fill="#fff" stroke="#444"/><path d="M945 844.5L972 844.5" stroke="#222" stroke-width="1" /><path d="M945 844 L955 840.5 V847.5 Z" fill="#111"/><path d="M698 863.5L830 863.5" stroke="#555" stroke-width="1" /><path d="M698 867.5L830 867.5" stroke="#555" stroke-width="1" /><path d="M698.5 860L698.5 870" stroke="#555" stroke-width="1" /><path d="M601 860.5L698 860.5" stroke="#555" stroke-width="1" /><rect x="760" y="861.5" width="4" height="6.5" fill="#fff" stroke="#222" stroke-width="0.8" /><path d="M830.5 860L830.5 884" stroke="#444" stroke-width="1" /><path d="M826.5 860L826.5 870" stroke="#444" stroke-width="1" /><path d="M864.5 860L864.5 884" stroke="#444" stroke-width="1" /><path d="M868.5 870L868.5 884" stroke="#444" stroke-width="1" /><path d="M959.5 870L959.5 884" stroke="#444" stroke-width="1" /><path d="M964.5 860L964.5 884" stroke="#444" stroke-width="1" /><path d="M997.5 860L997.5 884" stroke="#444" stroke-width="1" /><path d="M1000 863.5L1057 863.5" stroke="#555" stroke-width="1" /><path d="M1000 867.5L1057 867.5" stroke="#555" stroke-width="1" /><path d="M1135.5 871L1135.5 884" stroke="#444" stroke-width="1" /><path d="M1230.5 871L1230.5 884" stroke="#444" stroke-width="1" /><path d="M1238 873.5L1272 873.5" stroke="#444" stroke-width="1" /><path d="M1272 869L1272 884" stroke="#222" stroke-width="1.3" /><path d="M607.5 674L607.5 802" stroke="#555" stroke-width="1" /><path d="M612.5 674L612.5 802" stroke="#555" stroke-width="1" /><path d="M601 674.5L612 674.5" stroke="#555" stroke-width="1" /><path d="M601 802.5L612 802.5" stroke="#555" stroke-width="1" /><rect x="605.5" y="733" width="3" height="12" fill="#fff" stroke="#555" stroke-width="0.8" /><path d="M683.5 795 L659.5 819.5 L683.5 844 Z" fill="#3a4a60"/><path d="M664 815V824M668 811V828M672 807V832M676 803V836M680 799V840" stroke="#b9d3f5" stroke-width="1.6"/><circle cx="683.5" cy="819.5" r="14" fill="#b9d3f5" stroke="#456"/><path d="M669.5 819.5L697.5 819.5" stroke="#456" stroke-width="1" /><path d="M683.5 833.5L683.5 884" stroke="#456" stroke-width="1" /><text x="683.5" y="817.5" font-size="8.5" text-anchor="middle" fill="#456" >TYPE</text><text x="683.5" y="830.5" font-size="10" text-anchor="middle" fill="#456" >1</text><path d="M601.5 876L601.5 884" stroke="#444" stroke-width="1" /><path d="M650.5 876L650.5 884" stroke="#444" stroke-width="1" /><path d="M492.5 876L492.5 880" stroke="#444" stroke-width="1" /><path d="M514.5 876L514.5 880" stroke="#444" stroke-width="1" /><rect x="593" y="242" width="464" height="5" fill="#1010e6" stroke="none" stroke-width="1" /><rect x="596" y="242" width="5" height="634" fill="#1010e6" stroke="none" stroke-width="1" /><rect x="596" y="870.3" width="634" height="6" fill="#1010e6" stroke="none" stroke-width="1" /><rect x="727" y="218" width="22" height="22" fill="#5b9cf0" stroke="none" stroke-width="1" /><text x="738" y="233.5" font-size="12" text-anchor="middle" fill="#123" >1</text><circle cx="765.7" cy="277.6" r="9.6" fill="#c87a3c" stroke="#e85c48" stroke-width="1.4"/><text x="765.7" y="282" font-size="12.5" text-anchor="middle" fill="#333" >1</text><polygon points="949.5,304.5 954.2,311.9 962.5,314.6 956.9,321.4 956.8,330.1 948.7,326.9 940.4,329.5 940.9,320.8 935.8,313.7 944.3,311.5" fill="#f4600f" stroke="#f4600f" stroke-width="3" stroke-linejoin="round"/><text x="949" y="323" font-size="12.5" text-anchor="middle" fill="#222" >1</text><polygon points="567.2,721.0 571.8,728.5 580.0,731.4 574.3,738.0 574.1,746.7 566.1,743.4 557.7,745.9 558.4,737.2 553.4,730.0 561.9,728.0" fill="#1515e0" stroke="#1515e0" stroke-width="3" stroke-linejoin="round"/><text x="566.5" y="739.5" font-size="12" text-anchor="middle" fill="#fff" font-weight="bold">1</text><circle cx="1038.4" cy="398.5" r="10" fill="#ea7878" stroke="#e05050" stroke-width="1.2"/><text x="1038.4" y="403" font-size="12.5" text-anchor="middle" fill="#333" >2</text><circle cx="978.3" cy="506" r="10.5" fill="#f5a010"/><text x="978.3" y="510.5" font-size="12.5" text-anchor="middle" fill="#333" >1</text><circle cx="926" cy="552.7" r="10.5" fill="#f5a010"/><text x="926" y="557" font-size="12.5" text-anchor="middle" fill="#333" >2</text><path d="M420.5 112.5 H444.0 Q448.0 112.5 448.0 116.5 V133.5 Q448.0 137.5 444.0 137.5 H436 L432 143.5 L428 137.5 H420.5 Q416.5 137.5 416.5 133.5 V116.5 Q416.5 112.5 420.5 112.5Z" fill="#ffffa6" stroke="#111" stroke-width="1.1"/><text x="432.25" y="130.8" font-size="14" text-anchor="middle" fill="#111" >4</text><path d="M1003.5 269.5 H1027.0 Q1031.0 269.5 1031.0 273.5 V290.5 Q1031.0 294.5 1027.0 294.5 H1019 L1015 300.5 L1011 294.5 H1003.5 Q999.5 294.5 999.5 290.5 V273.5 Q999.5 269.5 1003.5 269.5Z" fill="#ffffa6" stroke="#111" stroke-width="1.1"/><text x="1015.25" y="287.8" font-size="14" text-anchor="middle" fill="#111" >1</text><path d="M706 335 H732 Q736 335 736 339 V356 Q736 360 732 360 H723 L719 366 L715 360 H706 Q702 360 702 356 V339 Q702 335 706 335Z" fill="#ffffa6" stroke="#111" stroke-width="1.1"/><text x="719.0" y="353.3" font-size="14" text-anchor="middle" fill="#111" ></text></svg>
<div style="left:1407px;top:82px;width:48px;height:802px;background:#fff"></div>
<div style="left:1407px;top:176.6px;width:48px;height:1px;background:#444"></div>
<div style="left:1407px;top:408px;width:48px;height:1px;background:#444"></div>
<div style="left:1407px;top:447px;width:48px;height:1px;background:#444"></div>
<div style="left:1407px;top:82px;width:48px;height:802px;overflow:hidden">
<span class="t mono" style="left:-7.0px;top:134.10px;font-size:16px;white-space:pre"> x10"</span>
<span class="t mono" style="left:-7.0px;top:164.90px;font-size:16px;white-space:pre">ion</span>
<span class="t mono" style="left:-7.0px;top:180.40px;font-size:16px;white-space:pre"> 72"</span>
<span class="t mono" style="left:-7.0px;top:196.40px;font-size:16px;white-space:pre">w 48"x</span>
<span class="t mono" style="left:-7.0px;top:227.10px;font-size:16px;white-space:pre">loor</span>
<span class="t mono" style="left:-7.0px;top:242.50px;font-size:16px;white-space:pre">20"</span>
<span class="t mono" style="left:-7.0px;top:258.00px;font-size:16px;white-space:pre">28"</span>
<span class="t mono" style="left:-7.0px;top:273.50px;font-size:16px;white-space:pre">30"</span>
<span class="t mono" style="left:-7.0px;top:289.00px;font-size:16px;white-space:pre">or 48"</span>
<span class="t mono" style="left:-7.0px;top:304.50px;font-size:16px;white-space:pre">er sal</span>
<span class="t mono" style="left:-4.8px;top:410.30px;font-size:16.7px;white-space:pre"> termi</span>
<span class="t mono" style="left:-4.8px;top:427.30px;font-size:16.7px;white-space:pre">e + à</span>
<span class="t mono" style="left:-4.8px;top:444.30px;font-size:16.7px;white-space:pre">nneau</span>
<span class="t mono" style="left:-4.8px;top:461.30px;font-size:16.7px;white-space:pre">PACE I</span>
<span class="t mono" style="left:-4.8px;top:478.30px;font-size:16.7px;white-space:pre">t déma</span>
<span class="t mono" style="left:-4.8px;top:521.70px;font-size:16.7px;white-space:pre">unt to</span>
<span class="t mono" style="left:-4.8px;top:538.50px;font-size:16.7px;white-space:pre">his pa</span>
<span class="t mono" style="left:-4.8px;top:580.40px;font-size:16.7px;white-space:pre">ng and</span>
<span class="t mono" style="left:-4.8px;top:597.50px;font-size:16.7px;white-space:pre">emplat</span>
<span class="t mono" style="left:-4.8px;top:614.30px;font-size:16.7px;white-space:pre">under</span>
<span class="t mono" style="left:-4.8px;top:631.40px;font-size:16.7px;white-space:pre">ish" i</span>
<span class="t mono" style="left:-4.8px;top:691.40px;font-size:16.7px;white-space:pre"> and c</span>
<span class="t mono" style="left:-4.8px;top:708.50px;font-size:16.7px;white-space:pre"> by cl</span>
<span class="t mono" style="left:-4.8px;top:725.10px;font-size:16.7px;white-space:pre">e take</span>
<span class="t mono" style="left:-4.8px;top:766.40px;font-size:16.7px;white-space:pre">jsfgjs</span>
<span class="t mono" style="left:21.5px;top:102.90px;font-size:18px">Tak</span>
<span class="t mono" style="left:2px;top:373.27px;font-size:20px">Anno</span>
</div>
<div style="left:1450.5px;top:82px;width:4.5px;height:802px;background:linear-gradient(90deg,rgba(0,0,0,0),rgba(0,0,0,.28))"></div>
<div style="left:355px;top:884px;width:1100px;height:20px;background:#081c28"></div>
<span class="t f14" style="left:365px;top:887px;color:#e8ecef">Scale 28'</span>
<svg style="position:absolute;left:437px;top:887px;overflow:visible" width="14" height="14" viewBox="0 0 14 14" ><rect x=".7" y=".7" width="12.6" height="12.6" fill="none" stroke="#f0c020" stroke-width="1.4"/><rect x="7" y="0" width="7" height="7" fill="#f0c020"/><rect x="0" y="7" width="7" height="7" fill="#f0c020"/></svg>
<div style="left:1057px;top:84px;width:350px;height:786px;background:#06121b;border:4px solid #8b0000"></div>
<div style="left:1061px;top:88px;width:342px;height:63px;background:#1f2e38"></div>
<div style="left:1061px;top:118px;width:342px;height:33px;background:#1c2a34"></div>
<svg style="position:absolute;left:1070px;top:95.5px;overflow:visible" width="18" height="11" viewBox="0 0 18.4 12" ><path d="M0 1.3 Q0 0 1.3 0 H5.2 L6.8 1.7 H12.8 Q14 1.7 14 3 V4 H4.4 Q3.4 4 2.9 5 L0 10.6 Z" fill="#fff"/><path d="M4.6 5.2 H17.2 Q18.3 5.2 17.8 6.2 L15.4 11.2 Q15 12 14.2 12 H0.6 L3.5 5.9 Q3.9 5.2 4.6 5.2 Z" fill="#fff"/></svg>
<span class="t f14" style="left:1097px;top:94px;">Sample Templates</span>
<div class="btn" style="left:1367px;top:90px;width:26px;height:23px;background:#33434e"><svg style="position:absolute;left:5.8px;top:4.0px;overflow:visible" width="14.4" height="14" viewBox="0 0 14.4 14" ><path d="M0 6.9 L7 3.5 L14 6.9 L7 10.3 Z" fill="#fff"/><path d="M0 9.9 L1.9 9 L7 11.5 L12.1 9 L14 9.9 L7 13.4 Z" fill="#fff"/><path d="M11 0 V6.2 M7.9 3.1 H14.1" stroke="#33434e" stroke-width="3.6" fill="none"/><path d="M11 0 V6.2 M7.9 3.1 H14.1" stroke="#fff" stroke-width="1.9" fill="none"/></svg></div>
<svg style="position:absolute;left:1091px;top:128.5px;overflow:visible" width="18" height="11" viewBox="0 0 18.4 12" ><path d="M0 1.3 Q0 0 1.3 0 H5.2 L6.8 1.7 H12.8 Q14 1.7 14 3 V4 H4.4 Q3.4 4 2.9 5 L0 10.6 Z" fill="#fff"/><path d="M4.6 5.2 H17.2 Q18.3 5.2 17.8 6.2 L15.4 11.2 Q15 12 14.2 12 H0.6 L3.5 5.9 Q3.9 5.2 4.6 5.2 Z" fill="#fff"/></svg>
<span class="t f14" style="left:1118.5px;top:127px;">1. Foundation</span>
<div class="btn" style="left:1367px;top:123px;width:26px;height:23px;background:#33434e"><svg style="position:absolute;left:5.8px;top:4.0px;overflow:visible" width="14.4" height="14" viewBox="0 0 14.4 14" ><path d="M0 6.9 L7 3.5 L14 6.9 L7 10.3 Z" fill="#fff"/><path d="M0 9.9 L1.9 9 L7 11.5 L12.1 9 L14 9.9 L7 13.4 Z" fill="#fff"/><path d="M11 0 V6.2 M7.9 3.1 H14.1" stroke="#33434e" stroke-width="3.6" fill="none"/><path d="M11 0 V6.2 M7.9 3.1 H14.1" stroke="#fff" stroke-width="1.9" fill="none"/></svg></div>
<svg style="position:absolute;left:1107px;top:159.4px;overflow:visible" width="13.4" height="17.0" viewBox="0 0 13.4 17" ><g fill="none" stroke="#fff" stroke-width="2" stroke-linecap="round"><path d="M2.8 3 V14"/><path d="M2.8 6.6 Q4.4 8.8 8.6 9.0"/><g fill="#06121b" stroke-width="1.5"><circle cx="2.8" cy="2.7" r="1.95"/><circle cx="2.8" cy="14.3" r="1.95"/><circle cx="10.7" cy="9.1" r="1.95"/></g></g></svg>
<span class="t b12" style="left:1129.5px;top:164px;">1.10. Footing 24"x10"</span>
<svg style="position:absolute;left:1107px;top:196.4px;overflow:visible" width="13.4" height="17.0" viewBox="0 0 13.4 17" ><g fill="none" stroke="#fff" stroke-width="2" stroke-linecap="round"><path d="M2.8 3 V14"/><path d="M2.8 6.6 Q4.4 8.8 8.6 9.0"/><g fill="#06121b" stroke-width="1.5"><circle cx="2.8" cy="2.7" r="1.95"/><circle cx="2.8" cy="14.3" r="1.95"/><circle cx="10.7" cy="9.1" r="1.95"/></g></g></svg>
<span class="t b12" style="left:1129.5px;top:201px;">1.20. Foundation Wall 96"x 8"</span>
<svg style="position:absolute;left:1107px;top:233.4px;overflow:visible" width="13.4" height="17.0" viewBox="0 0 13.4 17" ><g fill="none" stroke="#fff" stroke-width="2" stroke-linecap="round"><path d="M2.8 3 V14"/><path d="M2.8 6.6 Q4.4 8.8 8.6 9.0"/><g fill="#06121b" stroke-width="1.5"><circle cx="2.8" cy="2.7" r="1.95"/><circle cx="2.8" cy="14.3" r="1.95"/><circle cx="10.7" cy="9.1" r="1.95"/></g></g></svg>
<span class="t b12" style="left:1129.5px;top:238px;">1.20. Foundation Wall 96"x10"</span>
<svg style="position:absolute;left:1107px;top:271.8px;overflow:visible" width="14.7" height="14.7" viewBox="0 0 14.7 14.7" ><g fill="none" stroke="#fff" stroke-width="2.2" stroke-linejoin="round"><path d="M1.9 1.9 L12.8 1.9 L9.2 7.35 L12.8 12.8 L1.9 12.8 Z"/><g fill="#06121b" stroke-width="1.3"><circle cx="1.9" cy="1.9" r="1.5"/><circle cx="12.8" cy="1.9" r="1.5"/><circle cx="12.8" cy="12.8" r="1.5"/><circle cx="1.9" cy="12.8" r="1.5"/><circle cx="9.2" cy="7.35" r="1.3"/></g></g></svg>
<span class="t b12" style="left:1132.5px;top:275px;">1.30. Concrete Slab 4"</span>
<svg style="position:absolute;left:1107px;top:308.8px;overflow:visible" width="14.7" height="14.7" viewBox="0 0 14.7 14.7" ><g fill="none" stroke="#fff" stroke-width="2.2" stroke-linejoin="round"><path d="M1.9 1.9 L12.8 1.9 L9.2 7.35 L12.8 12.8 L1.9 12.8 Z"/><g fill="#06121b" stroke-width="1.3"><circle cx="1.9" cy="1.9" r="1.5"/><circle cx="12.8" cy="1.9" r="1.5"/><circle cx="12.8" cy="12.8" r="1.5"/><circle cx="1.9" cy="12.8" r="1.5"/><circle cx="9.2" cy="7.35" r="1.3"/></g></g></svg>
<span class="t b12" style="left:1132.5px;top:312px;">1.30. Concrete Slab 5"</span>
<svg style="position:absolute;left:1107px;top:345.8px;overflow:visible" width="14.7" height="14.7" viewBox="0 0 14.7 14.7" ><g fill="none" stroke="#fff" stroke-width="2.2" stroke-linejoin="round"><path d="M1.9 1.9 L12.8 1.9 L9.2 7.35 L12.8 12.8 L1.9 12.8 Z"/><g fill="#06121b" stroke-width="1.3"><circle cx="1.9" cy="1.9" r="1.5"/><circle cx="12.8" cy="1.9" r="1.5"/><circle cx="12.8" cy="12.8" r="1.5"/><circle cx="1.9" cy="12.8" r="1.5"/><circle cx="9.2" cy="7.35" r="1.3"/></g></g></svg>
<span class="t b12" style="left:1132.5px;top:349px;">1.30. Concrete Slab 6"</span>
<svg style="position:absolute;left:1107px;top:382.8px;overflow:visible" width="14.7" height="14.7" viewBox="0 0 14.7 14.7" ><g fill="none" stroke="#fff" stroke-width="2.2" stroke-linejoin="round"><path d="M1.9 1.9 L12.8 1.9 L9.2 7.35 L12.8 12.8 L1.9 12.8 Z"/><g fill="#06121b" stroke-width="1.3"><circle cx="1.9" cy="1.9" r="1.5"/><circle cx="12.8" cy="1.9" r="1.5"/><circle cx="12.8" cy="12.8" r="1.5"/><circle cx="1.9" cy="12.8" r="1.5"/><circle cx="9.2" cy="7.35" r="1.3"/></g></g></svg>
<span class="t b12" style="left:1132.5px;top:386px;">1.30. Dalle Béton 8"</span>
<svg style="position:absolute;left:1107px;top:419.8px;overflow:visible" width="14.7" height="14.7" viewBox="0 0 14.7 14.7" ><g fill="none" stroke="#fff" stroke-width="2.2" stroke-linejoin="round"><path d="M1.9 1.9 L12.8 1.9 L9.2 7.35 L12.8 12.8 L1.9 12.8 Z"/><g fill="#06121b" stroke-width="1.3"><circle cx="1.9" cy="1.9" r="1.5"/><circle cx="12.8" cy="1.9" r="1.5"/><circle cx="12.8" cy="12.8" r="1.5"/><circle cx="1.9" cy="12.8" r="1.5"/><circle cx="9.2" cy="7.35" r="1.3"/></g></g></svg>
<span class="t b12" style="left:1132.5px;top:423px;">Excavation 9'</span>
<svg style="position:absolute;left:1107px;top:455.4px;overflow:visible" width="13.4" height="17.0" viewBox="0 0 13.4 17" ><g fill="none" stroke="#fff" stroke-width="2" stroke-linecap="round"><path d="M2.8 3 V14"/><path d="M2.8 6.6 Q4.4 8.8 8.6 9.0"/><g fill="#06121b" stroke-width="1.5"><circle cx="2.8" cy="2.7" r="1.95"/><circle cx="2.8" cy="14.3" r="1.95"/><circle cx="10.7" cy="9.1" r="1.95"/></g></g></svg>
<span class="t b12" style="left:1129.5px;top:460px;">Linear</span>
<div style="left:1061px;top:484px;width:342px;height:203px;background:#374653"></div>
<div class="btn" style="left:1064px;top:491px;width:24px;height:23px;background:#081c28"><svg style="position:absolute;left:3.8px;top:4.2px;overflow:visible" width="16.4" height="14.5" viewBox="0 0 16.4 14.5" ><path d="M8.8 0 H16.4 V14.5 H5.2 V3.6 Z" fill="#f0c020"/><path d="M5.2 3.6 L8.8 0 V3.6 Z" fill="#b8981a"/><path d="M11 8.9 H4" stroke="#081c28" stroke-width="3.4" fill="none"/><path d="M11 8.9 H3" stroke="#f0c020" stroke-width="1.7" fill="none"/><path d="M0 8.9 L4.2 5.6 V12.2 Z" fill="#f0c020"/></svg></div>
<svg style="position:absolute;left:1107px;top:492.4px;overflow:visible" width="13.4" height="17.0" viewBox="0 0 13.4 17" ><g fill="none" stroke="#fff" stroke-width="2" stroke-linecap="round"><path d="M2.8 3 V14"/><path d="M2.8 6.6 Q4.4 8.8 8.6 9.0"/><g fill="#374653" stroke-width="1.5"><circle cx="2.8" cy="2.7" r="1.95"/><circle cx="2.8" cy="14.3" r="1.95"/><circle cx="10.7" cy="9.1" r="1.95"/></g></g></svg>
<span class="t b12" style="left:1129.5px;top:497px;">Linear</span>
<div class="btn" style="left:1368px;top:491px;width:24px;height:23px;background:#081c28"><svg style="position:absolute;left:6px;top:4px;overflow:visible" width="13" height="15" viewBox="0 0 13 15" ><path d="M0 3.4 H8.4 V15 H0 Z" fill="#fff"/><path d="M3.4 0 H9.2 L12.6 3.4 V11.8 H3.4 Z" fill="#fff" stroke="#081c28" stroke-width="1.2"/><path d="M9 0.4 V3.8 H12.4" fill="none" stroke="#081c28" stroke-width="1"/></svg></div>
<div style="left:1070.5px;top:542.5px;width:325px;height:139px;border:1px solid #4e5c68"></div>
<div style="left:1070.5px;top:521.5px;width:111px;height:22px;border:1px solid #4e5c68;border-bottom:none;background:#374653"></div>
<span class="t s11" style="left:1076px;top:528px;">Template Properties</span>
<span class="t s11" style="left:1187px;top:528px;color:#c9cfd4">Calculations</span>
<span class="t s11" style="left:1259.5px;top:528px;color:#c9cfd4">Page Totals</span>
<span class="t s11" style="left:1076px;top:555px;">Name:</span>
<div style="left:1114.5px;top:552px;width:254px;height:18px;border:1px solid #f0c020;background:#374653"></div>
<div style="left:1118px;top:554.5px;width:31px;height:13px;background:#1a62d2"></div>
<span class="t s11" style="left:1118.5px;top:556.1px;font-weight:bold;letter-spacing:-.3px">Linear</span>
<svg style="position:absolute;left:1376px;top:549.5px;overflow:visible" width="10" height="14" viewBox="0 0 10 14" ><path d="M1.6 0 H8.4 V1.6 H7.4 L7.8 5.4 Q10 6.6 10 8.8 H0 Q0 6.6 2.2 5.4 L2.6 1.6 H1.6 Z" fill="#f0c020"/><path d="M4.4 8.8 H5.6 V13 L5 14 L4.4 13 Z" fill="#f0c020"/></svg>
<span class="t s11" style="left:1076px;top:575px;">Note:</span>
<div style="left:1111px;top:572.5px;width:272px;height:17.5px;border:1px solid #4e5c68;background:#35444f"></div>
<span class="t s11" style="right:605px;top:596px;">Color:</span>
<div style="left:1207px;top:593px;width:16px;height:16px;border-radius:50%;background:#b99c50"></div>
<span class="t s11" style="right:605px;top:614.5px;">Line thickness:</span>
<span class="t" style="left:1212.5px;top:614px;font-size:12px;color:#f0c020">3</span>
<span class="t s11" style="right:605px;top:633px;">System:</span>
<span class="t" style="left:1212.5px;top:633px;font-size:12px;color:#f0c020">Metric</span>
<div style="left:1314px;top:650px;width:74px;height:22px;background:#d0213b;border-radius:3px"><svg style="position:absolute;left:8px;top:4.5px;overflow:visible" width="12" height="13" viewBox="0 0 12 14" ><path d="M0 1.6 H3.6 L4.3 0.3 Q4.5 0 4.9 0 H7.1 Q7.5 0 7.7 0.3 L8.4 1.6 H12 V3 H0 Z" fill="#fff"/><path d="M0.9 4 H11.1 L10.5 12.8 Q10.4 14 9.2 14 H2.8 Q1.6 14 1.5 12.8 Z" fill="#fff"/></svg><span class="t" style="left:28px;top:4px;font-size:14px">Delete</span></div>
<svg style="position:absolute;left:1107px;top:696.1px;overflow:visible" width="13.4" height="17.0" viewBox="0 0 13.4 17" ><g fill="none" stroke="#fff" stroke-width="2" stroke-linecap="round"><path d="M2.8 3 V14"/><path d="M2.8 6.6 Q4.4 8.8 8.6 9.0"/><g fill="#06121b" stroke-width="1.5"><circle cx="2.8" cy="2.7" r="1.95"/><circle cx="2.8" cy="14.3" r="1.95"/><circle cx="10.7" cy="9.1" r="1.95"/></g></g></svg>
<span class="t b12" style="left:1129.5px;top:700.7px;">Semeille 36x24</span>
<svg style="position:absolute;left:1107px;top:733.1px;overflow:visible" width="13.4" height="17.0" viewBox="0 0 13.4 17" ><g fill="none" stroke="#fff" stroke-width="2" stroke-linecap="round"><path d="M2.8 3 V14"/><path d="M2.8 6.6 Q4.4 8.8 8.6 9.0"/><g fill="#06121b" stroke-width="1.5"><circle cx="2.8" cy="2.7" r="1.95"/><circle cx="2.8" cy="14.3" r="1.95"/><circle cx="10.7" cy="9.1" r="1.95"/></g></g></svg>
<span class="t b12" style="left:1129.5px;top:737.7px;">Solage</span>
<div style="left:1061px;top:762px;width:342px;height:104px;background:#1f2e38"></div>
<svg style="position:absolute;left:1091px;top:772.0px;overflow:visible" width="15" height="12" viewBox="0 0 15 12" ><path d="M0 1.4 Q0 0 1.4 0 H5.6 L7.4 1.8 H13.6 Q15 1.8 15 3.2 V10.6 Q15 12 13.6 12 H1.4 Q0 12 0 10.6 Z" fill="#fff"/></svg>
<span class="t f14" style="left:1116px;top:772.0px;font-size:14.2px;letter-spacing:-.2px">2. Structure</span>
<div class="btn" style="left:1367px;top:767.5px;width:26px;height:23px;background:#33434e"><svg style="position:absolute;left:5.8px;top:4.0px;overflow:visible" width="14.4" height="14" viewBox="0 0 14.4 14" ><path d="M0 6.9 L7 3.5 L14 6.9 L7 10.3 Z" fill="#fff"/><path d="M0 9.9 L1.9 9 L7 11.5 L12.1 9 L14 9.9 L7 13.4 Z" fill="#fff"/><path d="M11 0 V6.2 M7.9 3.1 H14.1" stroke="#33434e" stroke-width="3.6" fill="none"/><path d="M11 0 V6.2 M7.9 3.1 H14.1" stroke="#fff" stroke-width="1.9" fill="none"/></svg></div>
<svg style="position:absolute;left:1091px;top:805.0px;overflow:visible" width="15" height="12" viewBox="0 0 15 12" ><path d="M0 1.4 Q0 0 1.4 0 H5.6 L7.4 1.8 H13.6 Q15 1.8 15 3.2 V10.6 Q15 12 13.6 12 H1.4 Q0 12 0 10.6 Z" fill="#fff"/></svg>
<span class="t f14" style="left:1116px;top:805.0px;font-size:14.2px;letter-spacing:-.2px">3. Ext. Finish</span>
<div class="btn" style="left:1367px;top:800.5px;width:26px;height:23px;background:#33434e"><svg style="position:absolute;left:5.8px;top:4.0px;overflow:visible" width="14.4" height="14" viewBox="0 0 14.4 14" ><path d="M0 6.9 L7 3.5 L14 6.9 L7 10.3 Z" fill="#fff"/><path d="M0 9.9 L1.9 9 L7 11.5 L12.1 9 L14 9.9 L7 13.4 Z" fill="#fff"/><path d="M11 0 V6.2 M7.9 3.1 H14.1" stroke="#33434e" stroke-width="3.6" fill="none"/><path d="M11 0 V6.2 M7.9 3.1 H14.1" stroke="#fff" stroke-width="1.9" fill="none"/></svg></div>
<svg style="position:absolute;left:1091px;top:838.0px;overflow:visible" width="15" height="12" viewBox="0 0 15 12" ><path d="M0 1.4 Q0 0 1.4 0 H5.6 L7.4 1.8 H13.6 Q15 1.8 15 3.2 V10.6 Q15 12 13.6 12 H1.4 Q0 12 0 10.6 Z" fill="#fff"/></svg>
<span class="t f14" style="left:1116px;top:838.0px;font-size:14.2px;letter-spacing:-.2px">4. Roof</span>
<div class="btn" style="left:1367px;top:833.5px;width:26px;height:23px;background:#33434e"><svg style="position:absolute;left:5.8px;top:4.0px;overflow:visible" width="14.4" height="14" viewBox="0 0 14.4 14" ><path d="M0 6.9 L7 3.5 L14 6.9 L7 10.3 Z" fill="#fff"/><path d="M0 9.9 L1.9 9 L7 11.5 L12.1 9 L14 9.9 L7 13.4 Z" fill="#fff"/><path d="M11 0 V6.2 M7.9 3.1 H14.1" stroke="#33434e" stroke-width="3.6" fill="none"/><path d="M11 0 V6.2 M7.9 3.1 H14.1" stroke="#fff" stroke-width="1.9" fill="none"/></svg></div>
<div style="left:575px;top:340px;width:342px;height:332px;background:#06121b;border:4px solid #8b0000"></div>
<div style="left:579px;top:344px;width:334px;height:31px;background:#1f2e38"></div>
<svg style="position:absolute;left:608px;top:352.5px;overflow:visible" width="18" height="11" viewBox="0 0 18.4 12" ><path d="M0 1.3 Q0 0 1.3 0 H5.2 L6.8 1.7 H12.8 Q14 1.7 14 3 V4 H4.4 Q3.4 4 2.9 5 L0 10.6 Z" fill="#fff"/><path d="M4.6 5.2 H17.2 Q18.3 5.2 17.8 6.2 L15.4 11.2 Q15 12 14.2 12 H0.6 L3.5 5.9 Q3.9 5.2 4.6 5.2 Z" fill="#fff"/></svg>
<span class="t f14" style="left:635.5px;top:351px;">1. Foundation</span>
<div class="btn" style="left:884px;top:347.5px;width:26px;height:23px;background:#33434e"><svg style="position:absolute;left:5.8px;top:4.0px;overflow:visible" width="14.4" height="14" viewBox="0 0 14.4 14" ><path d="M0 6.9 L7 3.5 L14 6.9 L7 10.3 Z" fill="#fff"/><path d="M0 9.9 L1.9 9 L7 11.5 L12.1 9 L14 9.9 L7 13.4 Z" fill="#fff"/><path d="M11 0 V6.2 M7.9 3.1 H14.1" stroke="#33434e" stroke-width="3.6" fill="none"/><path d="M11 0 V6.2 M7.9 3.1 H14.1" stroke="#fff" stroke-width="1.9" fill="none"/></svg></div>
<svg style="position:absolute;left:624px;top:383.4px;overflow:visible" width="13.4" height="17.0" viewBox="0 0 13.4 17" ><g fill="none" stroke="#fff" stroke-width="2" stroke-linecap="round"><path d="M2.8 3 V14"/><path d="M2.8 6.6 Q4.4 8.8 8.6 9.0"/><g fill="#06121b" stroke-width="1.5"><circle cx="2.8" cy="2.7" r="1.95"/><circle cx="2.8" cy="14.3" r="1.95"/><circle cx="10.7" cy="9.1" r="1.95"/></g></g></svg>
<span class="t b12" style="left:646.5px;top:388px;">1.10. Footing 24"x10"</span>
<svg style="position:absolute;left:624px;top:420.4px;overflow:visible" width="13.4" height="17.0" viewBox="0 0 13.4 17" ><g fill="none" stroke="#fff" stroke-width="2" stroke-linecap="round"><path d="M2.8 3 V14"/><path d="M2.8 6.6 Q4.4 8.8 8.6 9.0"/><g fill="#06121b" stroke-width="1.5"><circle cx="2.8" cy="2.7" r="1.95"/><circle cx="2.8" cy="14.3" r="1.95"/><circle cx="10.7" cy="9.1" r="1.95"/></g></g></svg>
<span class="t b12" style="left:646.5px;top:425px;">1.20. Foundation Wall 96"x 8"</span>
<svg style="position:absolute;left:624px;top:457.4px;overflow:visible" width="13.4" height="17.0" viewBox="0 0 13.4 17" ><g fill="none" stroke="#fff" stroke-width="2" stroke-linecap="round"><path d="M2.8 3 V14"/><path d="M2.8 6.6 Q4.4 8.8 8.6 9.0"/><g fill="#06121b" stroke-width="1.5"><circle cx="2.8" cy="2.7" r="1.95"/><circle cx="2.8" cy="14.3" r="1.95"/><circle cx="10.7" cy="9.1" r="1.95"/></g></g></svg>
<span class="t b12" style="left:646.5px;top:462px;">1.20. Foundation Wall 96"x10"</span>
<svg style="position:absolute;left:624px;top:495.8px;overflow:visible" width="14.7" height="14.7" viewBox="0 0 14.7 14.7" ><g fill="none" stroke="#fff" stroke-width="2.2" stroke-linejoin="round"><path d="M1.9 1.9 L12.8 1.9 L9.2 7.35 L12.8 12.8 L1.9 12.8 Z"/><g fill="#06121b" stroke-width="1.3"><circle cx="1.9" cy="1.9" r="1.5"/><circle cx="12.8" cy="1.9" r="1.5"/><circle cx="12.8" cy="12.8" r="1.5"/><circle cx="1.9" cy="12.8" r="1.5"/><circle cx="9.2" cy="7.35" r="1.3"/></g></g></svg>
<span class="t b12" style="left:649.5px;top:499px;">1.30. Concrete Slab 4"</span>
<svg style="position:absolute;left:624px;top:532.8px;overflow:visible" width="14.7" height="14.7" viewBox="0 0 14.7 14.7" ><g fill="none" stroke="#fff" stroke-width="2.2" stroke-linejoin="round"><path d="M1.9 1.9 L12.8 1.9 L9.2 7.35 L12.8 12.8 L1.9 12.8 Z"/><g fill="#06121b" stroke-width="1.3"><circle cx="1.9" cy="1.9" r="1.5"/><circle cx="12.8" cy="1.9" r="1.5"/><circle cx="12.8" cy="12.8" r="1.5"/><circle cx="1.9" cy="12.8" r="1.5"/><circle cx="9.2" cy="7.35" r="1.3"/></g></g></svg>
<span class="t b12" style="left:649.5px;top:536px;">1.30. Concrete Slab 5"</span>
<svg style="position:absolute;left:624px;top:569.8px;overflow:visible" width="14.7" height="14.7" viewBox="0 0 14.7 14.7" ><g fill="none" stroke="#fff" stroke-width="2.2" stroke-linejoin="round"><path d="M1.9 1.9 L12.8 1.9 L9.2 7.35 L12.8 12.8 L1.9 12.8 Z"/><g fill="#06121b" stroke-width="1.3"><circle cx="1.9" cy="1.9" r="1.5"/><circle cx="12.8" cy="1.9" r="1.5"/><circle cx="12.8" cy="12.8" r="1.5"/><circle cx="1.9" cy="12.8" r="1.5"/><circle cx="9.2" cy="7.35" r="1.3"/></g></g></svg>
<span class="t b12" style="left:649.5px;top:573px;">1.30. Concrete Slab 6"</span>
<svg style="position:absolute;left:624px;top:606.8px;overflow:visible" width="14.7" height="14.7" viewBox="0 0 14.7 14.7" ><g fill="none" stroke="#fff" stroke-width="2.2" stroke-linejoin="round"><path d="M1.9 1.9 L12.8 1.9 L9.2 7.35 L12.8 12.8 L1.9 12.8 Z"/><g fill="#06121b" stroke-width="1.3"><circle cx="1.9" cy="1.9" r="1.5"/><circle cx="12.8" cy="1.9" r="1.5"/><circle cx="12.8" cy="12.8" r="1.5"/><circle cx="1.9" cy="12.8" r="1.5"/><circle cx="9.2" cy="7.35" r="1.3"/></g></g></svg>
<span class="t b12" style="left:649.5px;top:610px;">1.30. Dalle Béton 8"</span>
<svg style="position:absolute;left:624px;top:643.8px;overflow:visible" width="14.7" height="14.7" viewBox="0 0 14.7 14.7" ><g fill="none" stroke="#fff" stroke-width="2.2" stroke-linejoin="round"><path d="M1.9 1.9 L12.8 1.9 L9.2 7.35 L12.8 12.8 L1.9 12.8 Z"/><g fill="#06121b" stroke-width="1.3"><circle cx="1.9" cy="1.9" r="1.5"/><circle cx="12.8" cy="1.9" r="1.5"/><circle cx="12.8" cy="12.8" r="1.5"/><circle cx="1.9" cy="12.8" r="1.5"/><circle cx="9.2" cy="7.35" r="1.3"/></g></g></svg>
<span class="t b12" style="left:649.5px;top:647px;">Excavation 9'</span>
<div class="btn" style="left:581px;top:382px;width:24px;height:23px;background:#33434e"><svg style="position:absolute;left:3.8px;top:3.8px;overflow:visible" width="16.4" height="14.5" viewBox="0 0 16.4 14.5" ><path d="M8.8 0 H16.4 V14.5 H5.2 V3.6 Z" fill="#f0c020"/><path d="M5.2 3.6 L8.8 0 V3.6 Z" fill="#b8981a"/><path d="M11 8.9 H4" stroke="#33434e" stroke-width="3.4" fill="none"/><path d="M11 8.9 H3" stroke="#f0c020" stroke-width="1.7" fill="none"/><path d="M0 8.9 L4.2 5.6 V12.2 Z" fill="#f0c020"/></svg></div>
<svg style="position:absolute;left:600.3px;top:399.2px;overflow:visible" width="17.6" height="24" viewBox="0 0 17 23" ><path d="M5 12.8 V2.2 Q5 .7 6.3 .7 Q7.6 .7 7.6 2.2 V8.6 H8.2 V7.6 Q8.2 6.4 9.4 6.4 Q10.6 6.4 10.6 7.6 V9 H11.2 V8.4 Q11.2 7.2 12.4 7.2 Q13.6 7.2 13.6 8.4 V9.8 H14.2 Q14.2 8.6 15.2 8.6 Q16.3 8.6 16.3 9.8 V16 Q16.3 22.3 11.2 22.3 H9.4 Q6.8 22.3 5.4 20.2 L.9 14.4 Q.1 13.2 1.1 12.4 Q2.2 11.7 3.3 12.8 L5 14.6 Z" fill="#fff" stroke="#0a141c" stroke-width=".8"/><path d="M8 9.4V12.4M10.9 9.8V12.4M13.9 10.4V12.6" stroke="#0a141c" stroke-width=".8"/></svg>
<div style="left:1455px;top:78px;width:351px;height:474px;background:#06121b;border:4px solid #8b0000"></div>
<div style="left:1459px;top:82px;width:343px;height:32px;background:#081c28"></div>
<div style="left:1459px;top:114px;width:343px;height:67px;background:#1f2e38"></div>
<div class="btn" style="left:1460px;top:86px;width:24px;height:23px;"><svg style="position:absolute;left:6.5px;top:7px;overflow:visible" width="11" height="9" viewBox="0 0 11.4 9" ><path d="M1.4 0.8 L5 4.5 L1.4 8.2 M6.4 0.8 L10 4.5 L6.4 8.2" fill="none" stroke="#fff" stroke-width="2" /></svg></div>
<span class="t" style="left:1490px;top:89px;font-size:17px">Templates</span>
<div class="btn" style="left:1766px;top:86px;width:26px;height:23px;"><svg style="position:absolute;left:5.5px;top:5.5px;overflow:visible" width="15" height="12" viewBox="0 0 15 12" ><path d="M0 1.4 Q0 0 1.4 0 H5.6 L7.4 1.8 H13.6 Q15 1.8 15 3.2 V10.6 Q15 12 13.6 12 H1.4 Q0 12 0 10.6 Z" fill="#fff"/><path d="M7.5 4.2 V10 M4.6 7.1 H10.4" stroke="#33434e" stroke-width="1.7" fill="none"/></svg></div>
<svg style="position:absolute;left:1468.5px;top:125px;overflow:visible" width="18" height="11" viewBox="0 0 18.4 12" ><path d="M0 1.3 Q0 0 1.3 0 H5.2 L6.8 1.7 H12.8 Q14 1.7 14 3 V4 H4.4 Q3.4 4 2.9 5 L0 10.6 Z" fill="#fff"/><path d="M4.6 5.2 H17.2 Q18.3 5.2 17.8 6.2 L15.4 11.2 Q15 12 14.2 12 H0.6 L3.5 5.9 Q3.9 5.2 4.6 5.2 Z" fill="#fff"/></svg>
<span class="t f14" style="left:1496px;top:123.5px;">Sample Templates</span>
<div class="btn" style="left:1766px;top:120.5px;width:26px;height:23px;background:#33434e"><svg style="position:absolute;left:5.8px;top:4.0px;overflow:visible" width="14.4" height="14" viewBox="0 0 14.4 14" ><path d="M0 6.9 L7 3.5 L14 6.9 L7 10.3 Z" fill="#fff"/><path d="M0 9.9 L1.9 9 L7 11.5 L12.1 9 L14 9.9 L7 13.4 Z" fill="#fff"/><path d="M11 0 V6.2 M7.9 3.1 H14.1" stroke="#33434e" stroke-width="3.6" fill="none"/><path d="M11 0 V6.2 M7.9 3.1 H14.1" stroke="#fff" stroke-width="1.9" fill="none"/></svg></div>
<svg style="position:absolute;left:1490px;top:158.5px;overflow:visible" width="18" height="11" viewBox="0 0 18.4 12" ><path d="M0 1.3 Q0 0 1.3 0 H5.2 L6.8 1.7 H12.8 Q14 1.7 14 3 V4 H4.4 Q3.4 4 2.9 5 L0 10.6 Z" fill="#fff"/><path d="M4.6 5.2 H17.2 Q18.3 5.2 17.8 6.2 L15.4 11.2 Q15 12 14.2 12 H0.6 L3.5 5.9 Q3.9 5.2 4.6 5.2 Z" fill="#fff"/></svg>
<span class="t f14" style="left:1517.5px;top:157px;font-weight:bold;letter-spacing:-.45px">1. Foundation</span>
<div class="btn" style="left:1682px;top:153px;width:24px;height:22px;background:#d0213b"><svg style="position:absolute;left:6px;top:4px;overflow:visible" width="12" height="14" viewBox="0 0 12 14" ><path d="M0 1.6 H3.6 L4.3 0.3 Q4.5 0 4.9 0 H7.1 Q7.5 0 7.7 0.3 L8.4 1.6 H12 V3 H0 Z" fill="#fff"/><path d="M0.9 4 H11.1 L10.5 12.8 Q10.4 14 9.2 14 H2.8 Q1.6 14 1.5 12.8 Z" fill="#fff"/></svg></div>
<div class="btn" style="left:1709px;top:153px;width:26px;height:22px;"><svg style="position:absolute;left:5px;top:3.4px;overflow:visible" width="16.5" height="15.4" viewBox="0 0 15 14" ><path d="M10.2 8.4 V12.2 H1.6 V3.6 H6.6" fill="none" stroke="#fff" stroke-width="1.8" stroke-linejoin="round" stroke-linecap="round"/><path d="M5 7.6 L10.6 2 L12.8 4.2 L7.2 9.8 L4.6 10.2 Z" fill="#fff"/><path d="M11.4 1.2 L12.2 0.4 Q12.7 0 13.2 0.4 L14.4 1.6 Q14.8 2.1 14.4 2.6 L13.6 3.4 Z" fill="#fff"/></svg></div>
<div class="btn" style="left:1738px;top:153px;width:25px;height:22px;"><svg style="position:absolute;left:5px;top:5px;overflow:visible" width="15" height="12" viewBox="0 0 15 12" ><path d="M0 1.4 Q0 0 1.4 0 H5.6 L7.4 1.8 H13.6 Q15 1.8 15 3.2 V10.6 Q15 12 13.6 12 H1.4 Q0 12 0 10.6 Z" fill="#fff"/><path d="M7.5 4.2 V10 M4.6 7.1 H10.4" stroke="#33434e" stroke-width="1.7" fill="none"/></svg></div>
<div class="btn" style="left:1766px;top:153px;width:26px;height:22px;background:#33434e"><svg style="position:absolute;left:5.8px;top:3.5px;overflow:visible" width="14.4" height="14" viewBox="0 0 14.4 14" ><path d="M0 6.9 L7 3.5 L14 6.9 L7 10.3 Z" fill="#fff"/><path d="M0 9.9 L1.9 9 L7 11.5 L12.1 9 L14 9.9 L7 13.4 Z" fill="#fff"/><path d="M11 0 V6.2 M7.9 3.1 H14.1" stroke="#33434e" stroke-width="3.6" fill="none"/><path d="M11 0 V6.2 M7.9 3.1 H14.1" stroke="#fff" stroke-width="1.9" fill="none"/></svg></div>
<div style="left:0;top:180px;width:1633px;height:100px;overflow:hidden"><div style="left:0;top:-180px">
<svg style="position:absolute;left:1506px;top:189.4px;overflow:visible" width="13.4" height="17.0" viewBox="0 0 13.4 17" ><g fill="none" stroke="#fff" stroke-width="2" stroke-linecap="round"><path d="M2.8 3 V14"/><path d="M2.8 6.6 Q4.4 8.8 8.6 9.0"/><g fill="#06121b" stroke-width="1.5"><circle cx="2.8" cy="2.7" r="1.95"/><circle cx="2.8" cy="14.3" r="1.95"/><circle cx="10.7" cy="9.1" r="1.95"/></g></g></svg>
<span class="t b12" style="left:1528.5px;top:194px;">1.10. Footing 24"x10"</span>
<svg style="position:absolute;left:1506px;top:226.4px;overflow:visible" width="13.4" height="17.0" viewBox="0 0 13.4 17" ><g fill="none" stroke="#fff" stroke-width="2" stroke-linecap="round"><path d="M2.8 3 V14"/><path d="M2.8 6.6 Q4.4 8.8 8.6 9.0"/><g fill="#06121b" stroke-width="1.5"><circle cx="2.8" cy="2.7" r="1.95"/><circle cx="2.8" cy="14.3" r="1.95"/><circle cx="10.7" cy="9.1" r="1.95"/></g></g></svg>
<span class="t b12" style="left:1528.5px;top:231px;">1.20. Foundation Wall 96"x 8"</span>
<svg style="position:absolute;left:1506px;top:263.4px;overflow:visible" width="13.4" height="17.0" viewBox="0 0 13.4 17" ><g fill="none" stroke="#fff" stroke-width="2" stroke-linecap="round"><path d="M2.8 3 V14"/><path d="M2.8 6.6 Q4.4 8.8 8.6 9.0"/><g fill="#06121b" stroke-width="1.5"><circle cx="2.8" cy="2.7" r="1.95"/><circle cx="2.8" cy="14.3" r="1.95"/><circle cx="10.7" cy="9.1" r="1.95"/></g></g></svg>
<span class="t b12" style="left:1528.5px;top:268px;">1.20. Foundation Wall 96"x10"</span>
</div></div>
<svg style="position:absolute;left:1506px;top:301.8px;overflow:visible" width="14.7" height="14.7" viewBox="0 0 14.7 14.7" ><g fill="none" stroke="#fff" stroke-width="2.2" stroke-linejoin="round"><path d="M1.9 1.9 L12.8 1.9 L9.2 7.35 L12.8 12.8 L1.9 12.8 Z"/><g fill="#06121b" stroke-width="1.3"><circle cx="1.9" cy="1.9" r="1.5"/><circle cx="12.8" cy="1.9" r="1.5"/><circle cx="12.8" cy="12.8" r="1.5"/><circle cx="1.9" cy="12.8" r="1.5"/><circle cx="9.2" cy="7.35" r="1.3"/></g></g></svg>
<span class="t b12" style="left:1531.5px;top:305px;">1.30. Concrete Slab 4"</span>
<svg style="position:absolute;left:1506px;top:338.8px;overflow:visible" width="14.7" height="14.7" viewBox="0 0 14.7 14.7" ><g fill="none" stroke="#fff" stroke-width="2.2" stroke-linejoin="round"><path d="M1.9 1.9 L12.8 1.9 L9.2 7.35 L12.8 12.8 L1.9 12.8 Z"/><g fill="#06121b" stroke-width="1.3"><circle cx="1.9" cy="1.9" r="1.5"/><circle cx="12.8" cy="1.9" r="1.5"/><circle cx="12.8" cy="12.8" r="1.5"/><circle cx="1.9" cy="12.8" r="1.5"/><circle cx="9.2" cy="7.35" r="1.3"/></g></g></svg>
<span class="t b12" style="left:1531.5px;top:342px;">1.30. Concrete Slab 5"</span>
<svg style="position:absolute;left:1506px;top:375.8px;overflow:visible" width="14.7" height="14.7" viewBox="0 0 14.7 14.7" ><g fill="none" stroke="#fff" stroke-width="2.2" stroke-linejoin="round"><path d="M1.9 1.9 L12.8 1.9 L9.2 7.35 L12.8 12.8 L1.9 12.8 Z"/><g fill="#06121b" stroke-width="1.3"><circle cx="1.9" cy="1.9" r="1.5"/><circle cx="12.8" cy="1.9" r="1.5"/><circle cx="12.8" cy="12.8" r="1.5"/><circle cx="1.9" cy="12.8" r="1.5"/><circle cx="9.2" cy="7.35" r="1.3"/></g></g></svg>
<span class="t b12" style="left:1531.5px;top:379px;">1.30. Concrete Slab 6"</span>
<svg style="position:absolute;left:1506px;top:412.8px;overflow:visible" width="14.7" height="14.7" viewBox="0 0 14.7 14.7" ><g fill="none" stroke="#fff" stroke-width="2.2" stroke-linejoin="round"><path d="M1.9 1.9 L12.8 1.9 L9.2 7.35 L12.8 12.8 L1.9 12.8 Z"/><g fill="#06121b" stroke-width="1.3"><circle cx="1.9" cy="1.9" r="1.5"/><circle cx="12.8" cy="1.9" r="1.5"/><circle cx="12.8" cy="12.8" r="1.5"/><circle cx="1.9" cy="12.8" r="1.5"/><circle cx="9.2" cy="7.35" r="1.3"/></g></g></svg>
<span class="t b12" style="left:1531.5px;top:416px;">1.30. Dalle Béton 8"</span>
<svg style="position:absolute;left:1506px;top:449.8px;overflow:visible" width="14.7" height="14.7" viewBox="0 0 14.7 14.7" ><g fill="none" stroke="#fff" stroke-width="2.2" stroke-linejoin="round"><path d="M1.9 1.9 L12.8 1.9 L9.2 7.35 L12.8 12.8 L1.9 12.8 Z"/><g fill="#06121b" stroke-width="1.3"><circle cx="1.9" cy="1.9" r="1.5"/><circle cx="12.8" cy="1.9" r="1.5"/><circle cx="12.8" cy="12.8" r="1.5"/><circle cx="1.9" cy="12.8" r="1.5"/><circle cx="9.2" cy="7.35" r="1.3"/></g></g></svg>
<span class="t b12" style="left:1531.5px;top:453px;">Excavation 9'</span>
<svg style="position:absolute;left:1506px;top:485.4px;overflow:visible" width="13.4" height="17.0" viewBox="0 0 13.4 17" ><g fill="none" stroke="#fff" stroke-width="2" stroke-linecap="round"><path d="M2.8 3 V14"/><path d="M2.8 6.6 Q4.4 8.8 8.6 9.0"/><g fill="#06121b" stroke-width="1.5"><circle cx="2.8" cy="2.7" r="1.95"/><circle cx="2.8" cy="14.3" r="1.95"/><circle cx="10.7" cy="9.1" r="1.95"/></g></g></svg>
<span class="t b12" style="left:1528.5px;top:490px;">Semeille 36x24</span>
<svg style="position:absolute;left:1506px;top:522.4px;overflow:visible" width="13.4" height="17.0" viewBox="0 0 13.4 17" ><g fill="none" stroke="#fff" stroke-width="2" stroke-linecap="round"><path d="M2.8 3 V14"/><path d="M2.8 6.6 Q4.4 8.8 8.6 9.0"/><g fill="#06121b" stroke-width="1.5"><circle cx="2.8" cy="2.7" r="1.95"/><circle cx="2.8" cy="14.3" r="1.95"/><circle cx="10.7" cy="9.1" r="1.95"/></g></g></svg>
<span class="t b12" style="left:1528.5px;top:527px;">Solage</span>
<div style="left:1633px;top:175px;width:158px;height:103px;background:#22313d;border-radius:4px;box-shadow:0 1px 4px rgba(0,0,0,.4)"></div>
<span class="t f14" style="left:1656.5px;top:190px;color:#eef1f3">Area</span>
<span class="t f14" style="left:1656.5px;top:219px;color:#eef1f3">Linear</span>
<span class="t f14" style="left:1656.5px;top:248px;color:#eef1f3">Count</span>
<div class="btn" style="left:1685px;top:54px;width:25px;height:23px;"><svg style="position:absolute;left:7px;top:7px;overflow:visible" width="11" height="9" viewBox="0 0 11.4 9" ><path d="M5 0.8 L1.4 4.5 L5 8.2 M10 0.8 L6.4 4.5 L10 8.2" fill="none" stroke="#fff" stroke-width="2" /></svg></div>
<span class="t" style="left:1716px;top:57px;font-size:17px">Templates</span>
<svg style="position:absolute;left:0;top:0" width="1815" height="913" viewBox="0 0 1815 913"><path d="M1612.0 65.0L1672.0 65.3" stroke="#8b0000" stroke-width="3"/><path d="M1690.0 65.4L1672.0 71.3L1672.0 59.3Z" fill="#8b0000"/><path d="M1782.0 213.0L1781.4 187.0" stroke="#8b0000" stroke-width="3"/><path d="M1781.0 172.0L1787.4 186.8L1775.4 187.1Z" fill="#8b0000"/><path d="M1548.0 234.0L1635.9 204.0" stroke="#8b0000" stroke-width="3"/><path d="M1652.0 198.5L1638.0 210.1L1633.8 197.8Z" fill="#8b0000"/><path d="M1548.0 234.0L1637.0 228.1" stroke="#8b0000" stroke-width="3"/><path d="M1654.0 227.0L1637.5 234.6L1636.6 221.6Z" fill="#8b0000"/><path d="M1548.0 234.0L1636.4 253.4" stroke="#8b0000" stroke-width="3"/><path d="M1653.0 257.0L1635.0 259.7L1637.8 247.0Z" fill="#8b0000"/><path d="M1326.0 501.0L1357.0 502.6" stroke="#8b0000" stroke-width="3"/><path d="M1374.0 503.5L1356.7 509.1L1357.4 496.1Z" fill="#8b0000"/><path d="M491.0 409.6L566.2 395.7" stroke="#8b0000" stroke-width="2.6"/><path d="M581.0 393.0L567.3 401.6L565.2 389.8Z" fill="#8b0000"/></svg>
<div class="circ" style="left:1597.5px;top:46.5px;width:30px;height:30px;line-height:30px">1</div>
<div class="circ" style="left:1618.5px;top:115.30000000000001px;width:30px;height:30px;line-height:30px">2</div>
<div class="circ" style="left:1452.3px;top:148.2px;width:30px;height:30px;line-height:30px">3</div>
<div class="circ" style="left:1767.5px;top:198.8px;width:30px;height:30px;line-height:30px">4</div>
<div class="circ" style="left:1533.3px;top:219.5px;width:30px;height:30px;line-height:30px">5</div>
<div class="circ" style="left:1170.4px;top:547.0px;width:30px;height:30px;line-height:30px">6</div>
<div class="circ" style="left:1311.3px;top:486.8px;width:30px;height:30px;line-height:30px">7</div>
<div class="circ" style="left:476.0px;top:394.6px;width:30px;height:30px;line-height:30px">8</div>
</div></body></html>
